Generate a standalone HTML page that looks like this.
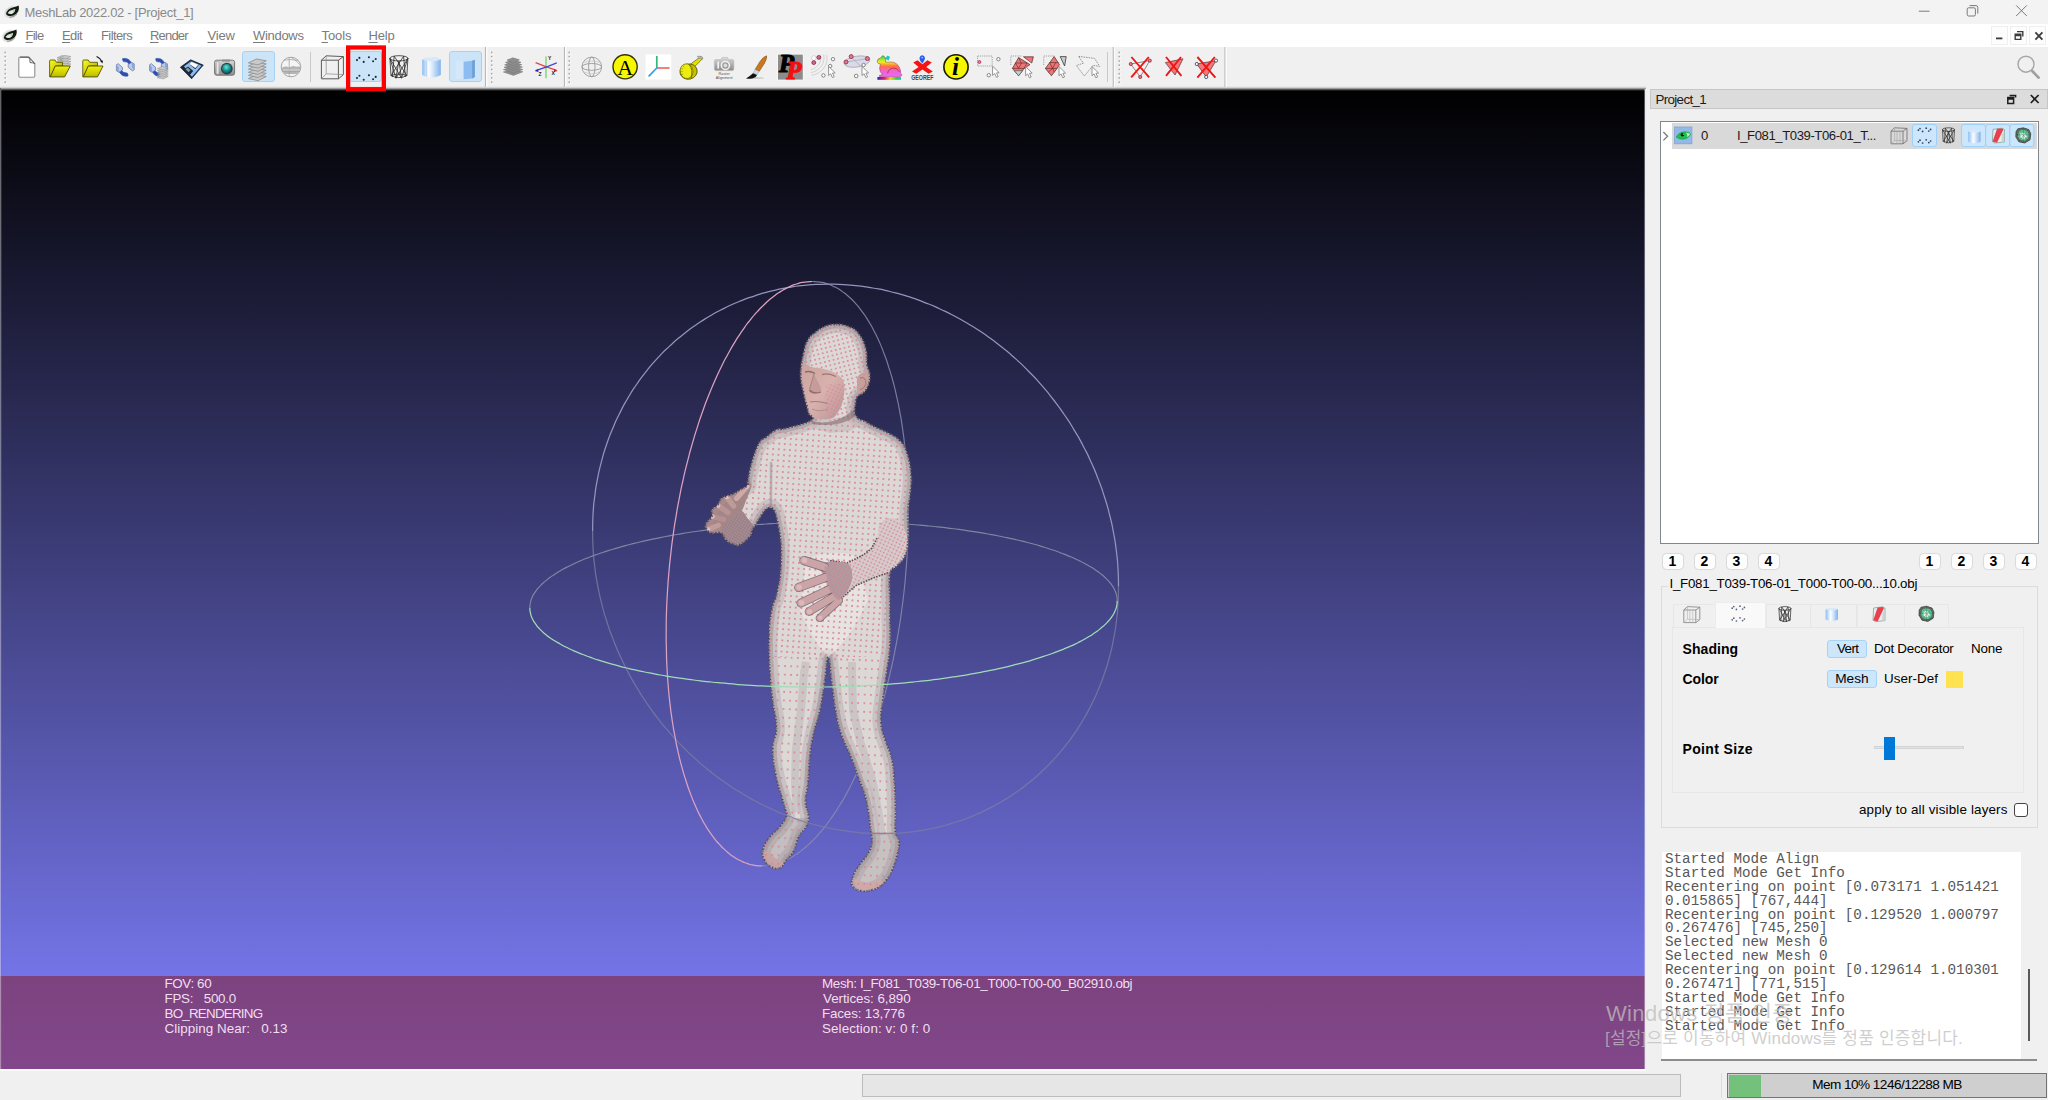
<!DOCTYPE html>
<html lang="en">
<head>
<meta charset="utf-8">
<title>MeshLab 2022.02 - [Project_1]</title>
<style>
*{box-sizing:border-box;margin:0;padding:0}
html,body{width:2048px;height:1100px;overflow:hidden;background:#f0f0f0}
body{position:relative;font-family:"Liberation Sans","NanumGothic","Noto Sans CJK KR",sans-serif;font-size:12px;color:#000}
.abs{position:absolute}
#titlebar{left:0;top:0;width:2048px;height:24px;background:#f3f3f3}
#title{left:25px;top:4px;font-size:13px;color:#8a8a8a;white-space:nowrap;line-height:18px}
#menubar{left:0;top:24px;width:2048px;height:23px;background:#fff}
.mi{top:28px;font-size:13px;color:#7b7b7b;white-space:nowrap;line-height:16px}
.mi u{text-decoration:underline;text-underline-offset:2px}
#toolbar{left:0;top:47px;width:2048px;height:41px;background:#f0f0f0}
#viewport{left:1px;top:88px;width:1644px;height:981px;background:linear-gradient(#000 0%,#8080ff 100%);overflow:hidden}
#infobar{left:0;top:888px;width:1644px;height:94px;background:linear-gradient(#7c437f,#81478a)}
.info{color:#f0dff0;font-size:13.4px;line-height:15px;white-space:pre;font-family:"Liberation Sans","NanumGothic",sans-serif}
#dock{left:1647px;top:88px;width:401px;height:982px;background:#f0f0f0}
#docktitle{left:1650px;top:89px;width:398px;height:20px;background:#dcdcdc;border:1px solid #c6c6c6}
#docktitle span{position:absolute;left:5px;top:2px;font-size:13.4px;line-height:16px;color:#1a1a1a}
#tree{left:1660px;top:121px;width:379px;height:423px;background:#fff;border:1px solid #82878f}
#row{left:1672px;top:123px;width:365px;height:26px;background:#d9d9d9}
.rt{font-size:13.1px;line-height:16px;white-space:nowrap;color:#1a1a1a}
.nb{top:553px;width:22px;height:17px;background:#fdfdfd;border:1px solid #dadada;border-radius:4.5px;font-size:14px;font-weight:bold;text-align:center;line-height:15px;color:#000;box-shadow:0 0 1px #e4e4e4}
#group{left:1661px;top:586px;width:377px;height:242px;border:1px solid #dcdcdc}
#grouptitle{left:1667.5px;top:576px;background:#f0f0f0;padding:0 2px;font-size:13.3px;line-height:16px;white-space:nowrap;letter-spacing:-0.247px}
#tabpane{left:1672px;top:627px;width:352px;height:166px;border:1px solid #e6e6e6;background:#f0f0f0}
.tab{top:604px;height:23px;background:#f0f0f0;border:1px solid #e7e7e7;border-bottom:none}
.tsel{background:#f9f9f9;border:1px solid #ececec;border-bottom:none}
.lbl{font-size:14px;font-weight:bold;left:1682px;line-height:16px;white-space:nowrap}
.opt{font-size:13.4px;line-height:16px;white-space:nowrap}
.sel{background:#cce6fb;border:1px solid #a6d2f6;border-radius:3px}
#log{left:1662px;top:852px;width:359px;height:207px;background:#fff;overflow:hidden}
#logtext{left:3px;top:1px;font-family:"Liberation Mono",monospace;font-size:14.27px;line-height:13.875px;color:#585858;white-space:pre}
.wm{color:rgba(190,190,190,.75);white-space:nowrap;font-family:"Liberation Sans","Noto Sans CJK KR","NanumGothic",sans-serif}
#wm1{letter-spacing:.34px;margin-left:1px}
#wm2{letter-spacing:.19px}
.lgl{position:relative;height:13.875px;white-space:pre}
/*FIT*/
#title{letter-spacing:-0.307px;margin-left:-0.50px}
#mi1{letter-spacing:-0.750px;margin-left:-0.50px}
#mi2{letter-spacing:-0.600px;margin-left:0.00px}
#mi3{letter-spacing:-0.600px;margin-left:1.00px}
#mi4{letter-spacing:-0.810px;margin-left:0.00px}
#mi5{letter-spacing:-0.150px;margin-left:1.50px}
#mi6{letter-spacing:-0.300px;margin-left:2.00px}
#mi7{letter-spacing:-0.110px;margin-left:1.50px}
#mi8{letter-spacing:-0.150px;margin-left:0.50px}
#dtt{letter-spacing:-0.674px;margin-left:-0.50px}
#rzero{letter-spacing:0.000px;margin-left:1.00px}
#rname{letter-spacing:-0.409px;margin-left:0.00px}
#lb1{letter-spacing:0.075px;margin-left:0.50px}
#lb2{letter-spacing:-0.115px;margin-left:0.50px}
#lb3{letter-spacing:0.350px;margin-left:0.50px}
#op1{letter-spacing:-0.600px;margin-left:1.00px}
#op2{letter-spacing:-0.300px;margin-left:0.00px}
#op3{letter-spacing:-0.150px;margin-left:0.00px}
#op5{letter-spacing:0.064px;margin-left:-1.00px}
#op6{letter-spacing:0.155px;margin-left:1.00px}
#mem{letter-spacing:-0.540px;margin-left:0.00px}
#ia1{letter-spacing:-0.375px;margin-left:0.50px}
#ia2{letter-spacing:-0.245px;margin-left:0.50px}
#ia3{letter-spacing:-0.777px;margin-left:0.50px}
#ia4{letter-spacing:0.045px;margin-left:0.50px}
#ib1{letter-spacing:-0.352px;margin-left:0.00px}
#ib2{letter-spacing:-0.064px;margin-left:1.00px}
#ib3{letter-spacing:-0.150px;margin-left:0.00px}
#ib4{letter-spacing:0.094px;margin-left:0.00px}
/*ENDFIT*/
#status{left:0;top:1069px;width:2048px;height:31px;background:#f0f0f0}
</style>
</head>
<body>
<div id="titlebar" class="abs"></div>
<div id="title" class="abs">MeshLab 2022.02 - [Project_1]</div>
<div id="menubar" class="abs"></div>
<div id="mi1" class="abs mi" style="left:26px"><u>F</u>ile</div>
<div id="mi2" class="abs mi" style="left:62px"><u>E</u>dit</div>
<div id="mi3" class="abs mi" style="left:100px">Fi<u>l</u>ters</div>
<div id="mi4" class="abs mi" style="left:150px"><u>R</u>ender</div>
<div id="mi5" class="abs mi" style="left:206px"><u>V</u>iew</div>
<div id="mi6" class="abs mi" style="left:251px"><u>W</u>indows</div>
<div id="mi7" class="abs mi" style="left:320px"><u>T</u>ools</div>
<div id="mi8" class="abs mi" style="left:368px"><u>H</u>elp</div>
<div id="toolbar" class="abs"></div>
<svg class="abs" style="left:0;top:0;z-index:4" width="2048" height="88" viewBox="0 0 2048 88">
<defs><radialGradient id="glogo" cx=".5" cy=".5" r=".5"><stop offset="0" stop-color="#9c9c9c"/><stop offset=".6" stop-color="#c2c2c2"/><stop offset="1" stop-color="#e6e6e6" stop-opacity=".2"/></radialGradient>
<g id="mlogo"><ellipse cx="8" cy="8" rx="8.4" ry="6.4" transform="rotate(-28 8 8)" fill="url(#glogo)"/>
<path d="M2.6 9.6 Q4 5 9.4 3.6 Q13.4 2.4 15.2 1.6 Q16.4 6 13.2 9.6 Q9.4 12.6 5.4 12 Q2.8 11.4 2.6 9.6 Z" fill="#141a14"/>
<path d="M4.2 9 Q6 6.4 9.4 5.8 L12 5 Q11.6 8 9.4 9.4 Q6.4 10.6 4.2 9 Z" fill="#dfeadf"/>
<path d="M9.2 6 L11.8 5.2 Q11.4 7.6 9.8 8.8 Z" fill="#a6d6a8"/>
<path d="M13.6 9.8 Q11 13.4 6 13.4" fill="none" stroke="#8a8a8a" stroke-width="1"/></g></defs>
<use href="#mlogo" x="3.4" y="4"/>
<use href="#mlogo" x="1.2" y="28"/>
<g fill="none" stroke="#7a7a7a" stroke-width="1">
<path d="M1918.8 11.2 H1929.6"/>
<path d="M1969.6 5.6 H1976 Q1977.8 5.6 1977.8 7.4 V13.6"/>
<rect x="1967.2" y="7.8" width="8.2" height="8.2" rx="1.4"/>
<path d="M2016.2 5.4 L2026.8 16 M2026.8 5.4 L2016.2 16"/>
</g>
<g fill="#fdfdfd" stroke="#efefef" stroke-width="1">
<rect x="1991.5" y="26.5" width="16" height="18"/><rect x="2010.5" y="26.5" width="16" height="18"/><rect x="2029.5" y="26.5" width="16" height="18"/>
</g>
<g fill="none" stroke="#3c3c3c" stroke-width="1.4">
<path d="M1996 38.4 H2002.4" stroke-width="1.8"/>
<path d="M2017 31.6 H2022.8 V36.6 M2015.2 34.2 H2020.8 V39.4 H2015.2 Z M2015.2 35.6 H2020.8"/>
<path d="M2035.4 32.4 L2042.4 39.6 M2042.4 32.4 L2035.4 39.6" stroke-width="1.8"/>
</g>
<circle cx="2026" cy="64.2" r="8" fill="none" stroke="#a6a6a6" stroke-width="1.4"/>
<path d="M2032.4 71.2 L2038.6 77.6" stroke="#a0a0a0" stroke-width="2.8" stroke-linecap="round"/>
</svg>
<!--TB-START--><svg class="abs" style="left:0;top:44px;z-index:5" width="1240" height="48" viewBox="0 44 1240 48">
<defs>
<linearGradient id="gfold" x1="0" y1="0" x2="0" y2="1"><stop offset="0" stop-color="#f4f400"/><stop offset="1" stop-color="#b8b800"/></linearGradient>
<linearGradient id="gfoldb" x1="0" y1="0" x2="1" y2="1"><stop offset="0" stop-color="#ffff20"/><stop offset="1" stop-color="#9a9a00"/></linearGradient>
<linearGradient id="gcyl" x1="0" y1="0" x2="1" y2="0"><stop offset="0" stop-color="#8cbcf0"/><stop offset=".35" stop-color="#fbfdff"/><stop offset=".55" stop-color="#d8e8fa"/><stop offset="1" stop-color="#7fb2ea"/></linearGradient>
<linearGradient id="gcam" x1="0" y1="0" x2="0" y2="1"><stop offset="0" stop-color="#d8d8d8"/><stop offset="1" stop-color="#8c8c8c"/></linearGradient>
<radialGradient id="glens" cx=".45" cy=".35" r=".7"><stop offset="0" stop-color="#7fe0d8"/><stop offset=".5" stop-color="#149a98"/><stop offset="1" stop-color="#0a4a52"/></radialGradient>
<linearGradient id="gbun" x1="0" y1="0" x2="0" y2="1"><stop offset="0" stop-color="#20e040"/><stop offset=".3" stop-color="#f0f020"/><stop offset=".5" stop-color="#ff7040"/><stop offset=".75" stop-color="#f060e0"/><stop offset="1" stop-color="#e070f0"/></linearGradient>
<linearGradient id="grain" x1="0" y1="0" x2="1" y2="0"><stop offset="0" stop-color="#3020c0"/><stop offset=".3" stop-color="#e02060"/><stop offset=".55" stop-color="#f0d020"/><stop offset=".8" stop-color="#30d040"/><stop offset="1" stop-color="#20c0c0"/></linearGradient>
<g id="cur"><path d="M0 0 L0 9.2 L2.1 7.3 L3.8 11.2 L5.6 10.4 L3.9 6.7 L6.6 6.5 Z" fill="#fff" stroke="#8a8a8a" stroke-width=".9" stroke-linejoin="round"/></g>
<g id="lay"><path d="M0 2.2 L5 0 L11 1 L6 3.4 Z" fill="#c9c9c9" stroke="#8f8f8f" stroke-width=".5"/></g>
</defs>
<!-- handles -->
<g><circle cx="6.1" cy="53.3" r=".75" fill="#fff"/><circle cx="5.2" cy="52.4" r=".85" fill="#a6a6a6"/><circle cx="6.1" cy="57.5" r=".75" fill="#fff"/><circle cx="5.2" cy="56.6" r=".85" fill="#a6a6a6"/><circle cx="6.1" cy="61.8" r=".75" fill="#fff"/><circle cx="5.2" cy="60.9" r=".85" fill="#a6a6a6"/><circle cx="6.1" cy="66.1" r=".75" fill="#fff"/><circle cx="5.2" cy="65.2" r=".85" fill="#a6a6a6"/><circle cx="6.1" cy="70.3" r=".75" fill="#fff"/><circle cx="5.2" cy="69.4" r=".85" fill="#a6a6a6"/><circle cx="6.1" cy="74.6" r=".75" fill="#fff"/><circle cx="5.2" cy="73.7" r=".85" fill="#a6a6a6"/><circle cx="6.1" cy="78.8" r=".75" fill="#fff"/><circle cx="5.2" cy="77.9" r=".85" fill="#a6a6a6"/><circle cx="6.1" cy="83.1" r=".75" fill="#fff"/><circle cx="5.2" cy="82.2" r=".85" fill="#a6a6a6"/><circle cx="492.6" cy="53.3" r=".75" fill="#fff"/><circle cx="491.7" cy="52.4" r=".85" fill="#a6a6a6"/><circle cx="492.6" cy="57.5" r=".75" fill="#fff"/><circle cx="491.7" cy="56.6" r=".85" fill="#a6a6a6"/><circle cx="492.6" cy="61.8" r=".75" fill="#fff"/><circle cx="491.7" cy="60.9" r=".85" fill="#a6a6a6"/><circle cx="492.6" cy="66.1" r=".75" fill="#fff"/><circle cx="491.7" cy="65.2" r=".85" fill="#a6a6a6"/><circle cx="492.6" cy="70.3" r=".75" fill="#fff"/><circle cx="491.7" cy="69.4" r=".85" fill="#a6a6a6"/><circle cx="492.6" cy="74.6" r=".75" fill="#fff"/><circle cx="491.7" cy="73.7" r=".85" fill="#a6a6a6"/><circle cx="492.6" cy="78.8" r=".75" fill="#fff"/><circle cx="491.7" cy="77.9" r=".85" fill="#a6a6a6"/><circle cx="492.6" cy="83.1" r=".75" fill="#fff"/><circle cx="491.7" cy="82.2" r=".85" fill="#a6a6a6"/><circle cx="570.1" cy="53.3" r=".75" fill="#fff"/><circle cx="569.2" cy="52.4" r=".85" fill="#a6a6a6"/><circle cx="570.1" cy="57.5" r=".75" fill="#fff"/><circle cx="569.2" cy="56.6" r=".85" fill="#a6a6a6"/><circle cx="570.1" cy="61.8" r=".75" fill="#fff"/><circle cx="569.2" cy="60.9" r=".85" fill="#a6a6a6"/><circle cx="570.1" cy="66.1" r=".75" fill="#fff"/><circle cx="569.2" cy="65.2" r=".85" fill="#a6a6a6"/><circle cx="570.1" cy="70.3" r=".75" fill="#fff"/><circle cx="569.2" cy="69.4" r=".85" fill="#a6a6a6"/><circle cx="570.1" cy="74.6" r=".75" fill="#fff"/><circle cx="569.2" cy="73.7" r=".85" fill="#a6a6a6"/><circle cx="570.1" cy="78.8" r=".75" fill="#fff"/><circle cx="569.2" cy="77.9" r=".85" fill="#a6a6a6"/><circle cx="570.1" cy="83.1" r=".75" fill="#fff"/><circle cx="569.2" cy="82.2" r=".85" fill="#a6a6a6"/><circle cx="1120.1" cy="53.3" r=".75" fill="#fff"/><circle cx="1119.2" cy="52.4" r=".85" fill="#a6a6a6"/><circle cx="1120.1" cy="57.5" r=".75" fill="#fff"/><circle cx="1119.2" cy="56.6" r=".85" fill="#a6a6a6"/><circle cx="1120.1" cy="61.8" r=".75" fill="#fff"/><circle cx="1119.2" cy="60.9" r=".85" fill="#a6a6a6"/><circle cx="1120.1" cy="66.1" r=".75" fill="#fff"/><circle cx="1119.2" cy="65.2" r=".85" fill="#a6a6a6"/><circle cx="1120.1" cy="70.3" r=".75" fill="#fff"/><circle cx="1119.2" cy="69.4" r=".85" fill="#a6a6a6"/><circle cx="1120.1" cy="74.6" r=".75" fill="#fff"/><circle cx="1119.2" cy="73.7" r=".85" fill="#a6a6a6"/><circle cx="1120.1" cy="78.8" r=".75" fill="#fff"/><circle cx="1119.2" cy="77.9" r=".85" fill="#a6a6a6"/><circle cx="1120.1" cy="83.1" r=".75" fill="#fff"/><circle cx="1119.2" cy="82.2" r=".85" fill="#a6a6a6"/></g>
<!-- separators -->
<g stroke="#c9c9c9" stroke-width="1">
<line x1="310.5" y1="52" x2="310.5" y2="82"/><line x1="1107.5" y1="52" x2="1107.5" y2="82"/>
</g>
<g stroke="#b9b9b9" stroke-width="1.2">
<line x1="485.5" y1="47" x2="485.5" y2="87"/><line x1="564.5" y1="47" x2="564.5" y2="87"/><line x1="1113.3" y1="47" x2="1113.3" y2="87"/><line x1="1225" y1="47" x2="1225" y2="87"/>
</g>
<g stroke="#fdfdfd" stroke-width="1.2">
<line x1="486.7" y1="47" x2="486.7" y2="87"/><line x1="565.7" y1="47" x2="565.7" y2="87"/><line x1="1114.5" y1="47" x2="1114.5" y2="87"/><line x1="1226.2" y1="47" x2="1226.2" y2="87"/>
</g>
<!-- checked backgrounds -->
<rect x="242.5" y="51.5" width="32" height="30" rx="2.5" fill="#cce4f7" stroke="#a6d2f5" stroke-width="1"/>
<rect x="349.5" y="51.5" width="32" height="30" rx="2.5" fill="#cce4f7" stroke="#a6d2f5" stroke-width="1"/>
<rect x="449.5" y="51.5" width="32" height="30" rx="2.5" fill="#cce4f7" stroke="#a6d2f5" stroke-width="1"/>
<!-- 1 new doc -->
<path d="M20.2 57 H28.6 L34.8 63.6 V75.8 Q34.8 77.2 33.4 77.2 H20.2 Q18.8 77.2 18.8 75.8 V58.4 Q18.8 57 20.2 57 Z" fill="#fff" stroke="#8e8e8e" stroke-width="1.1" stroke-linejoin="round"/>
<path d="M28.6 57 Q30.4 59.6 30 62.6 Q32.8 62.4 34.8 63.8 Z" fill="#f2f2f2" stroke="#5a5a5a" stroke-width=".9" stroke-linejoin="round"/>
<path d="M20 57.2 H28.4" stroke="#606060" stroke-width="1.2"/>
<!-- 2 folder + layers -->
<g transform="translate(57,55.5)"><use href="#lay" y="7.5"/><use href="#lay" y="5.6"/><use href="#lay" y="3.7"/><use href="#lay" y="1.8"/><use href="#lay" y="0"/><use href="#lay" x="3" y="7.5"/><use href="#lay" x="3" y="5"/><use href="#lay" x="3" y="2.5"/><use href="#lay" x="3" y="0"/></g>
<path d="M49.6 61 Q49.6 60 50.6 60 H55 L56.5 62.3 H62.5 V66 H55.5 L50.5 76.8 H49.6 Z" fill="url(#gfoldb)" stroke="#5a5a00" stroke-width=".9" stroke-linejoin="round"/>
<path d="M55.3 66 H70.3 L64.6 76.9 H50.2 Z" fill="url(#gfold)" stroke="#4c4c00" stroke-width=".9" stroke-linejoin="round"/>
<!-- 3 folder + arrow -->
<path d="M82.8 61 Q82.8 60 83.8 60 H88.2 L89.7 62.3 H97.5 V66 H88.5 L83.5 76.8 H82.8 Z" fill="url(#gfoldb)" stroke="#5a5a00" stroke-width=".9" stroke-linejoin="round"/>
<path d="M88.3 66 H103 L97.5 76.9 H83.2 Z" fill="url(#gfold)" stroke="#4c4c00" stroke-width=".9" stroke-linejoin="round"/>
<path d="M96.5 56.5 Q100.5 58 101.8 62" fill="none" stroke="#222" stroke-width="1.1"/>
<path d="M100.3 61 L103 60.5 L102.4 63.6 Z" fill="#111"/>
<!-- 4 reload -->
<g id="rel">
<path d="M122.6 58.6 Q128.6 57.4 131.2 62.6 L129 64 Q127.4 61.4 123.4 61.6 Q122.2 60 122.6 58.6 Z" fill="#2c4fb0" stroke="#2c4fb0" stroke-width=".6" stroke-linejoin="round"/>
<path d="M128.2 64.4 L131.8 62.4 L134.2 63.8 V69.8 L132.4 70.9 L128.2 67.2 Z" fill="#b7ccf3" stroke="#5a6892" stroke-width=".7" stroke-linejoin="round"/>
<path d="M131.8 62.6 L134 63.9 V69.6 L131.9 67.6 Z" fill="#8aa6e0"/>
</g>
<use href="#rel" transform="rotate(180 125.3 67.3)"/>
<!-- 5 reload + layers -->
<use href="#rel" transform="translate(33.2 0)"/>
<use href="#rel" transform="translate(33.2 0) rotate(180 125.3 67.3)"/>
<g transform="translate(157.3,66.5)"><use href="#lay" y="9"/><use href="#lay" y="7.2"/><use href="#lay" y="5.4"/><use href="#lay" y="3.6"/><use href="#lay" y="1.8"/><use href="#lay" y="0"/></g>
<!-- 6 save -->
<path d="M190.6 59.8 L203.3 65.1 L191.6 78.8 L180.3 67.2 Z" fill="#16283f" stroke="#0c1624" stroke-width=".6" stroke-linejoin="round"/>
<path d="M184 66.5 L190.5 61.5 L193 62.6 L190.2 65 L195.3 69.3 L199 64.6 L201.5 65.7 L192 76.8 L190 74.7 L193.2 71 L188 66.6 L185.5 68.2 Z" fill="#8ebcf0"/>
<path d="M191.6 61.6 L198.7 64.6 L195.4 68.3 L189.3 64.2 Z" fill="#fff" stroke="#3c5a80" stroke-width=".4"/>
<path d="M185.5 69.2 L187.8 67.6 L190.6 70.2 L188.5 72.2 Z" fill="#8c948c"/>
<!-- 7 camera -->
<rect x="214.6" y="60.2" width="20" height="15" rx="2" fill="url(#gcam)" stroke="#6e6e6e" stroke-width=".9"/>
<rect x="216.3" y="61.5" width="2.6" height="12.5" fill="#e8e8e8" stroke="#9a9a9a" stroke-width=".4"/>
<rect x="222" y="59.6" width="8" height="2" fill="#909090"/>
<circle cx="226.8" cy="68.6" r="5.9" fill="#3c3c3c"/>
<circle cx="226.8" cy="68.6" r="4.7" fill="url(#glens)"/>
<!-- 8 layers (checked) -->
<g transform="translate(248.4,59) scale(1.62 1.75)"><use href="#lay" y="9"/><use href="#lay" y="7.2"/><use href="#lay" y="5.4"/><use href="#lay" y="3.6"/><use href="#lay" y="1.8"/><use href="#lay" y="0"/></g>
<!-- 9 raster globe -->
<circle cx="291" cy="67" r="9.8" fill="#f4f4f4" stroke="#a8a8a8" stroke-width="1"/>
<path d="M281.6 68 Q286 65.5 289 67.5 Q293 64.8 296 66.8 L300.5 66.3 Q300.5 72 296.5 74 H285 Q281.8 71.5 281.6 68 Z" fill="#b4b4b4"/>
<path d="M282 71.2 H300 M289.2 57.4 V76.6 M291 57.2 Q296.5 61 300 64.6 M284 60.2 Q291 58.8 298.2 60.4" fill="none" stroke="#9c9c9c" stroke-width=".7"/>
<path d="M283 70 H299.4" stroke="#e4e4e4" stroke-width=".8"/>
<!-- 10 bbox -->
<g fill="none" stroke="#4a4a4a" stroke-width=".9" stroke-linejoin="round">
<rect x="321.4" y="60.2" width="17" height="18.6"/>
<path d="M321.4 60.2 L326.2 55.8 L343.4 56.6 L338.4 60.2 M343.4 56.6 V74.6 L338.4 78.8"/>
<path d="M326.2 55.8 V73.8 L321.4 78.8 M326.2 73.8 L343.4 74.6" stroke="#8a8a8a" stroke-width=".7"/>
</g>
<!-- 11 points -->
<g fill="#1b2d48">
<circle cx="359.4" cy="57.9" r="1.05"/><circle cx="357" cy="60.1" r="1.05"/><circle cx="363.7" cy="61.9" r="1.05"/><circle cx="368.9" cy="57.3" r="1.05"/><circle cx="375.7" cy="59" r="1.05"/><circle cx="373.1" cy="61.3" r="1.05"/>
<circle cx="359.4" cy="75.8" r="1.05"/><circle cx="357" cy="78" r="1.05"/><circle cx="363.7" cy="79.8" r="1.05"/><circle cx="368.9" cy="75.2" r="1.05"/><circle cx="375.7" cy="76.9" r="1.05"/><circle cx="373.1" cy="79.2" r="1.05"/>
</g>
<rect x="348.15" y="47.5" width="35.7" height="41.7" fill="none" stroke="#ff0000" stroke-width="4.3"/>
<!-- 12 wireframe -->
<g fill="none" stroke="#2c2c2c" stroke-width=".8" stroke-linejoin="round">
<ellipse cx="398.9" cy="58.3" rx="9" ry="2.6"/>
<path d="M389.9 58.3 L391 75.6 Q398.9 79.6 406.9 75.6 L407.9 58.3"/>
<path d="M391 75.6 Q398.9 72.4 406.9 75.6"/>
<path d="M389.9 58.3 L401.5 78.2 M407.9 58.3 L396 78.2 M394.2 56.2 L406.9 75.6 M403.6 56.2 L391 75.6 M394.2 56.2 L392.4 77 M403.6 56.2 L405.4 77 M398.9 60.9 L396 78.2 M398.9 60.9 L401.5 78.2 M389.9 58.3 L396 78.2 M407.9 58.3 L401.5 78.2"/>
</g>
<!-- 13 flat cylinder -->
<path d="M422.2 59.5 Q431.5 54.5 440.8 59.5 V75 Q431.5 80 422.2 75 Z" fill="url(#gcyl)"/>
<path d="M422.2 59.5 Q431.5 54.8 440.8 59.5 Q431.5 63.4 422.2 59.5 Z" fill="#d6e8fb"/>
<path d="M436.5 61 V76.7 M426.5 61 V76.7" stroke="#a9cdf5" stroke-width=".6"/>
<!-- 14 smooth half cylinder -->
<path d="M455.5 60.5 H463.6 V79 H455.5 Z" fill="#d7e9fa" opacity=".8"/>
<path d="M463.6 61.8 L472.2 60.8 L474.8 59.8 V77 L472.2 78.6 L463.6 79.2 Z" fill="#8dbdf0"/>
<path d="M472.2 60.8 L474.8 59.8 V77 L472.2 78.6 Z" fill="#6c9fd8"/>
<!-- 15 layer stack dark -->
<g transform="translate(503.4,57.6)" fill="#8e8e8e" stroke="#707070" stroke-width=".5">
<path d="M0 14.4 L9.5 11.8 L19.5 14.2 L10 17.8 Z"/><path d="M0 12 L9.5 9.4 L19.5 11.8 L10 15.4 Z"/><path d="M0.6 9.6 L9.5 7 L19 9.4 L10 13 Z"/><path d="M1.2 7.2 L9.5 4.6 L18.4 7 L10 10.6 Z"/><path d="M2 4.8 L9.5 2.4 L17.6 4.6 L10 8.2 Z"/><path d="M3.6 2.4 L9.5 0.2 L16 2.2 L10 5.6 Z"/>
</g>
<!-- 16 axis -->
<line x1="546" y1="56.6" x2="546" y2="78.2" stroke="#8edb8a" stroke-width="1.7"/>
<path d="M535.6 62.6 Q546 67 556.6 70.4" fill="none" stroke="#e04848" stroke-width="1.3"/>
<path d="M556.8 62.8 Q546 67.4 535.6 70.6" fill="none" stroke="#4848d8" stroke-width="1.3"/>
<path d="M554 69 L557.6 71 L554 72 Z" fill="#d02020"/>
<path d="M538.2 69 L534.8 71 L538.4 72 Z" fill="#2020c0"/>
<text x="548" y="60.4" font-family="Liberation Sans, sans-serif" font-size="5" font-weight="bold" fill="#222">Y</text>
<text x="538.6" y="75.8" font-family="Liberation Sans, sans-serif" font-size="5" font-weight="bold" fill="#222">Z</text>
<text x="551.4" y="75.4" font-family="Liberation Sans, sans-serif" font-size="5" font-weight="bold" fill="#222">X</text>
<!-- 17 trackball globe -->
<g fill="none" stroke="#9a9a9a" stroke-width=".9">
<circle cx="591.8" cy="66.9" r="9.8"/>
<ellipse cx="591.8" cy="66.9" rx="9.8" ry="3.4"/>
<ellipse cx="591.8" cy="66.9" rx="3.2" ry="9.8"/>
<path d="M583 62.6 Q591.8 59.4 600.6 62.6 M583.4 71.8 Q591.8 75.6 600.2 71.8" stroke-width=".6" stroke="#bdbdbd"/>
</g>
<!-- 18 A -->
<circle cx="625.1" cy="66.8" r="12.1" fill="#f7f700" stroke="#33330a" stroke-width="1.4"/>
<text x="625.1" y="74.6" text-anchor="middle" font-family="Liberation Serif, serif" font-size="22" fill="#000">A</text>
<!-- 19 axes white -->
<rect x="645.5" y="54.5" width="25.8" height="25" fill="#fff"/>
<path d="M656.8 56 V68" stroke="#35b67c" stroke-width="1.7"/>
<path d="M656.8 68 H669.6" stroke="#f06a6a" stroke-width="1.7"/>
<path d="M656.8 68 L648.6 76.4" stroke="#2aa4e0" stroke-width="1.7"/>
<!-- 20 tape -->
<path d="M688.5 66 Q693 62 697 59.4 L700.6 56.2 L702.6 58.6 L700 61.4 Q696 65.5 692.5 68 Z" fill="#e6e000" stroke="#5a5a00" stroke-width=".7" stroke-linejoin="round"/>
<path d="M697.4 56 L702.2 56.8 L702.9 58.8 L698.4 58.4 Z" fill="#b4b4c4" stroke="#777" stroke-width=".4"/>
<ellipse cx="688.6" cy="71.6" rx="8.6" ry="7.6" transform="rotate(-12 688.6 71.6)" fill="#c8c400" stroke="#4a4a00" stroke-width=".8"/>
<ellipse cx="686.6" cy="71.2" rx="6.4" ry="7.4" transform="rotate(-12 686.6 71.2)" fill="#ecec10" stroke="#5a5a00" stroke-width=".6"/>
<path d="M689.4 64.8 Q693.4 70 691 78" fill="none" stroke="#5a5a00" stroke-width=".8"/>
<path d="M683 66 L684.2 67 M681.6 68.6 L683 69.2 M681.2 71.6 L682.6 71.6 M681.8 74.6 L683.2 74.2" stroke="#5a5a00" stroke-width=".5"/>
<!-- 21 raster alignment camera -->
<path d="M716 59.6 H720.6 L722.2 57.4 H727.4 L728.8 59.6 H732.4 Q733.8 59.6 733.8 61 V69 Q733.8 70.6 732.4 70.6 H716 Q714.4 70.6 714.4 69 V61 Q714.4 59.6 716 59.6 Z" fill="url(#gcam)" stroke="#b2b2b2" stroke-width=".5"/>
<rect x="717.4" y="61.6" width="1.6" height="7" fill="#f4f4f4"/>
<circle cx="725.4" cy="65.4" r="4" fill="#9a9a9a" stroke="#f2f2f2" stroke-width="1.5"/>
<circle cx="725.4" cy="65.4" r="1.9" fill="#dcdcdc"/>
<text x="724.2" y="74.9" text-anchor="middle" font-family="Liberation Sans, sans-serif" font-size="3.8" fill="#555">Raster</text>
<text x="724.2" y="79.2" text-anchor="middle" font-family="Liberation Sans, sans-serif" font-size="3.8" fill="#555">Alignment</text>
<!-- 22 brush -->
<ellipse cx="757" cy="78" rx="7" ry="1" fill="#c8c8c8" opacity=".8"/>
<path d="M766.6 55.8 Q767.4 58 764.4 63.4 L759.2 71.4 L755 69.6 L760 61.4 Q763.6 56.4 766.6 55.8 Z" fill="#c8781e" stroke="#7a4410" stroke-width=".5"/>
<path d="M759.2 71.4 L757 75 L753 73.2 L755 69.6 Z" fill="#ccd8e4" stroke="#8a96a4" stroke-width=".4"/>
<path d="M757 75 Q756.4 77.4 753 78.2 Q749 79 746 78.6 Q750 76 753 73.2 Z" fill="#111"/>
<!-- 23 PP -->
<rect x="777.3" y="53.8" width="26.2" height="26.4" fill="#fafafa"/>
<rect x="778" y="54.6" width="24.8" height="25" fill="#8c8c8c"/>
<text x="779" y="72" font-family="Liberation Serif, serif" font-size="24.5" font-weight="bold" font-style="italic" fill="#000" stroke="#000" stroke-width="1.2" stroke-linejoin="round">P</text>
<text x="786.4" y="79.4" font-family="Liberation Serif, serif" font-size="24.5" font-weight="bold" font-style="italic" fill="#f01010" stroke="#f01010" stroke-width="1.2" stroke-linejoin="round">P</text>
<!-- 24 select points -->
<g fill="none" stroke="#cfcfcf" stroke-width=".9">
<path d="M823.8 54.6 Q825.4 65 817 70.2 Q813.4 72.4 810.8 72.6"/>
<path d="M826.8 55 Q828.6 66.6 818.6 72.8 Q815 75 811.6 75.2"/>
<path d="M820.8 54.6 Q822 63 815.8 67.4 Q813.4 69.2 810.8 69.6"/>
</g>
<circle cx="813.8" cy="58" r="2.3" fill="#fff" stroke="#ccc" stroke-width=".8"/>
<circle cx="818.8" cy="57.4" r="1.9" fill="#d86a86" stroke="#7a1a38" stroke-width=".8"/>
<circle cx="813.8" cy="62.6" r="1.9" fill="#d86a86" stroke="#7a1a38" stroke-width=".8"/>
<g fill="#fff" stroke="#777" stroke-width=".9"><circle cx="833" cy="59.2" r="1.7"/><circle cx="823.4" cy="75.4" r="1.7"/><circle cx="830.2" cy="66" r="1.7"/></g>
<use href="#cur" x="828.6" y="66.4"/>
<!-- 25 select plane -->
<ellipse cx="857" cy="61.6" rx="13" ry="5.4" transform="rotate(-9 857 61.6)" fill="#d9d9ea" stroke="#aeaeb4" stroke-width=".9"/>
<path d="M846 62 L867.4 58.6 M851.2 56.8 L861 66.6" stroke="#9a9aa8" stroke-width=".6"/>
<g fill="#e07a90" stroke="#8a2a44" stroke-width=".8"><circle cx="851.2" cy="56.6" r="2"/><circle cx="846" cy="62" r="2"/><circle cx="867.4" cy="58.6" r="2"/></g>
<circle cx="856.2" cy="76" r="1.8" fill="#fff" stroke="#777" stroke-width=".9"/>
<circle cx="863.6" cy="65" r="1.7" fill="#fff" stroke="#777" stroke-width=".9"/>
<use href="#cur" x="862" y="66.4"/>
<!-- 26 bunny -->
<path d="M884.4 58.6 L887.8 55.4 L890 57 L888.6 60.4 Z" fill="#20c8c0"/>
<path d="M877.2 62 Q877 58.6 880.6 58 L882.4 55.8 Q884.4 55.4 884.8 57.8 Q886 59.6 885.4 62 Q888 62.4 891.4 62 Q897 62.6 899.4 67.4 Q901 70.4 900.6 73.2 Q902.4 74.4 901.4 76 L897.6 76.8 H879.6 L879.4 75.4 L882.6 74.6 Q879.6 72 879.6 68.4 Q879.8 65.6 880.8 64.4 Q878 64 877.2 62 Z" fill="url(#gbun)" stroke="#a02860" stroke-width=".5"/>
<path d="M887.6 73.4 Q888.4 68.6 893.6 68 Q898 68.4 899.6 72" fill="none" stroke="#a01850" stroke-width=".7"/>
<rect x="877.4" y="77" width="23.6" height="2.8" fill="url(#grain)"/>
<!-- 27 georef -->
<path d="M913.2 62.4 L917.6 60.2 L922.4 64.2 L927.4 60.2 L931.8 62.6 L926.2 67 L932.8 71.6 L928.6 73.8 L922.4 69.6 L916.2 73.8 L912 71.6 L918.6 67 Z" fill="#f41414"/>
<path d="M922.2 63.6 Q918.6 59 919.8 57 Q920.6 55.2 922.2 55.2 Q923.9 55.2 924.7 57 Q925.8 59 922.2 63.6 Z" fill="#2a5af0"/>
<circle cx="922.2" cy="57.6" r=".9" fill="#a8c0ff"/>
<text x="922.4" y="79.6" text-anchor="middle" font-family="Liberation Sans, sans-serif" font-size="6.3" font-weight="bold" fill="#444" textLength="22.4" lengthAdjust="spacingAndGlyphs">GEOREF</text>
<!-- 28 info -->
<circle cx="956" cy="66.9" r="12.1" fill="#f7f700" stroke="#1a1a00" stroke-width="1.6"/>
<text x="955.6" y="75.4" text-anchor="middle" font-family="Liberation Serif, serif" font-size="25" font-weight="bold" font-style="italic" fill="#000">i</text>
<!-- 29 select vertices -->
<rect x="977.6" y="56" width="14.6" height="10" fill="none" stroke="#8a8a8a" stroke-width=".8" stroke-dasharray="1.2 1"/>
<circle cx="979.4" cy="62" r="1.5" fill="#e87a90" stroke="#a02848" stroke-width=".7"/>
<g fill="#fff" stroke="#777" stroke-width=".9"><circle cx="998.4" cy="59.2" r="1.7"/><circle cx="988.8" cy="75.2" r="1.7"/></g>
<use href="#cur" x="992.6" y="66.2"/>
<!-- 30 select faces -->
<path d="M1010.8 65 V56 H1022" fill="none" stroke="#8a8a8a" stroke-width=".8" stroke-dasharray="1.2 1"/>
<path d="M1018.6 57.6 L1012.4 68.4 L1018.6 75.8 L1024 68.6 L1030 64.6 Z" fill="#f07474" stroke="#4a2a2a" stroke-width=".7" stroke-linejoin="round"/>
<path d="M1012.4 68.4 H1024 M1015.4 63 H1027 L1024 68.6 M1015.4 63 L1018.6 68.4 L1021.4 63 L1018.6 57.6" fill="none" stroke="#4a2a2a" stroke-width=".6"/>
<path d="M1014.4 70.8 L1018.6 75.8 L1022.6 70.6 Z" fill="#c6d0cc" stroke="#4a4a4a" stroke-width=".6"/>
<path d="M1023.4 56.8 H1033.4 L1031.6 63.4 Z" fill="#f07474" stroke="#4a2a2a" stroke-width=".7" stroke-linejoin="round"/>
<path d="M1021.6 57 L1032 64.6" stroke="#f4f4f4" stroke-width="1.3"/>
<use href="#cur" x="1025.6" y="66.6"/>
<!-- 31 select connected -->
<path d="M1043.8 65 V56 H1055" fill="none" stroke="#8a8a8a" stroke-width=".8" stroke-dasharray="1.2 1"/>
<path d="M1054.2 56.6 L1045.4 68.4 L1051.4 75.8 L1057 68.6 L1059.4 64.6 Z" fill="#f07474" stroke="#4a2a2a" stroke-width=".7" stroke-linejoin="round"/>
<path d="M1045.4 68.4 H1057 M1049.6 62.6 H1058.4 M1049.6 62.6 L1052.6 68.4 L1055.6 62.6 M1048.4 72.2 L1052.6 68.4 L1054.4 72.2" fill="none" stroke="#4a2a2a" stroke-width=".6"/>
<path d="M1060.2 56.6 H1066.2 L1064.6 66 Z" fill="#c6ccca" stroke="#3a3a3a" stroke-width=".8" stroke-linejoin="round"/>
<use href="#cur" x="1059" y="66.6"/>
<!-- 32 polyline -->
<path d="M1078.6 56.4 L1094.6 58.4 L1099.6 66.4 L1093 65.4 L1084.4 76 L1076.4 65.6 L1083.4 63.2 Z" fill="#f2f2f2" stroke="#7c7c7c" stroke-width=".8" stroke-dasharray="1.6 .9" stroke-linejoin="round"/>
<use href="#cur" x="1092" y="66.6"/>
<!-- 33 delete verts -->
<path d="M1130.8 64 L1149.8 60.6 L1140.2 77 Z" fill="none" stroke="#6a5a5a" stroke-width=".7"/>
<g fill="#e07a8c" stroke="#7a2030" stroke-width=".7"><circle cx="1130.8" cy="64" r="1.6"/><circle cx="1149.8" cy="60.6" r="1.6"/><circle cx="1140.2" cy="77" r="1.6"/></g>
<path d="M1131.4 57 L1149.2 77.4 M1148.8 57 L1131.2 77.4" stroke="#f01414" stroke-width="1.9" fill="none"/>
<!-- 34 delete faces -->
<path d="M1165.4 62.6 L1183 58.8 L1175 75 Z" fill="#f47878" stroke="#5a3030" stroke-width=".7" stroke-linejoin="round"/>
<path d="M1166 57 L1181.4 75.8 M1181 57 L1166 75.8" stroke="#f01414" stroke-width="1.9" fill="none"/>
<!-- 35 delete both -->
<path d="M1196.8 64 L1216 60.6 L1206.2 77 Z" fill="#f47878" stroke="#4a3040" stroke-width=".7" stroke-linejoin="round"/>
<g fill="#fff" stroke="#3a3040" stroke-width=".8"><circle cx="1196.8" cy="64" r="1.6"/><circle cx="1216" cy="60.6" r="1.6"/><circle cx="1206.2" cy="77" r="1.6"/></g>
<path d="M1197.4 57 L1215.4 77.6 M1214.8 57 L1197.4 77.6" stroke="#f01414" stroke-width="1.9" fill="none"/>
</svg>
<!--TB-END-->
<div id="viewport" class="abs">
<!--FIG-START--><svg class="abs" style="left:0;top:0" width="1644" height="981" viewBox="1 88 1644 981">
<defs>
<pattern id="pd1" width="5.6" height="5.6" patternUnits="userSpaceOnUse" patternTransform="rotate(4)"><rect x="1" y="1" width="1.7" height="1.7" fill="#dc8094"/></pattern>
<pattern id="pd2" width="4.5" height="4.5" patternUnits="userSpaceOnUse" patternTransform="rotate(-14)"><rect x="1" y="1" width="1.6" height="1.6" fill="#dc8094"/></pattern>
<pattern id="pd3" width="6.2" height="8.6" patternUnits="userSpaceOnUse" patternTransform="rotate(2)"><rect x="1" y="1" width="1.7" height="1.7" fill="#d98498"/></pattern>
<pattern id="pd4" width="3.6" height="3.6" patternUnits="userSpaceOnUse" patternTransform="rotate(25)"><rect x=".6" y=".6" width="1.5" height="1.5" fill="#d67e92"/></pattern>
<pattern id="pm" width="2.6" height="2.6" patternUnits="userSpaceOnUse" patternTransform="rotate(30)"><path d="M0 0H2.6M0 0V2.6" stroke="#b49ca2" stroke-width=".6"/></pattern>
<linearGradient id="gface" x1="0" y1="0" x2="1" y2="1"><stop offset="0" stop-color="#c9a29f"/><stop offset=".5" stop-color="#d9b2ae"/><stop offset="1" stop-color="#b89294"/></linearGradient>
<clipPath id="cbody"><path d="M836.0 324.5 C841.4 324.5 842.9 324.5 848.0 326.5 C853.1 328.5 853.9 328.0 858.0 333.0 C862.1 338.0 863.4 340.5 865.5 348.0 C867.6 355.5 866.1 359.2 867.0 365.0 C867.9 370.8 869.0 368.8 869.5 373.0 C870.0 377.2 870.3 378.6 869.0 383.0 C867.7 387.4 866.6 389.0 864.0 392.0 C861.4 395.0 860.0 393.4 858.0 396.0 C856.0 398.6 856.0 398.3 855.5 403.0 C855.0 407.7 853.5 411.6 856.0 416.0 C858.5 420.4 861.6 419.4 866.0 422.0 C870.4 424.6 869.4 424.2 875.0 427.0 C880.6 429.8 884.2 430.7 890.0 434.0 C895.8 437.3 896.1 436.8 900.0 441.0 C903.9 445.2 903.9 444.3 906.5 452.0 C909.1 459.7 910.2 464.0 911.0 474.0 C911.8 484.0 910.7 486.4 910.0 495.0 C909.3 503.6 908.5 500.5 908.0 511.0 C907.5 521.5 908.8 529.4 908.0 540.0 C907.2 550.6 907.3 550.3 904.6 556.4 C901.9 562.5 899.8 562.1 896.4 566.2 C893.0 570.3 891.5 565.6 890.0 574.0 C888.5 582.4 890.0 591.7 890.0 602.0 C890.0 612.3 890.0 607.7 890.0 618.0 C890.0 628.3 890.8 633.0 890.0 646.0 C889.2 659.0 888.1 660.8 886.4 673.6 C884.7 686.4 884.0 689.5 882.7 701.0 C881.4 712.5 880.3 713.4 881.0 722.7 C881.7 732.0 883.0 732.5 885.5 741.0 C888.0 749.5 889.7 749.3 891.8 759.0 C893.9 768.7 893.6 770.8 894.5 782.7 C895.4 794.6 895.3 798.5 895.5 810.0 C895.7 821.5 894.7 824.6 895.5 831.8 C896.3 839.0 898.6 835.7 899.0 841.0 C899.4 846.3 899.0 847.5 897.3 854.5 C895.6 861.5 894.3 865.0 891.8 871.0 C889.3 877.0 889.2 876.4 886.4 880.0 C883.6 883.6 883.4 884.1 880.0 886.4 C876.6 888.7 876.0 888.9 871.8 890.0 C867.6 891.1 866.3 891.8 861.8 891.0 C857.3 890.2 854.8 889.6 852.7 886.4 C850.6 883.2 851.2 882.2 852.7 877.3 C854.2 872.4 855.6 870.8 859.0 865.5 C862.4 860.2 864.3 859.6 867.3 854.5 C870.3 849.4 871.0 848.9 871.8 843.6 C872.6 838.3 872.2 841.7 870.9 831.8 C869.6 821.9 869.2 813.3 866.4 801.0 C863.6 788.7 862.4 788.8 859.0 779.0 C855.6 769.2 856.0 769.6 851.8 759.0 C847.6 748.4 844.8 745.0 841.0 733.6 C837.2 722.2 837.6 721.9 835.5 710.0 C833.4 698.1 833.5 695.0 831.8 682.7 C830.1 670.4 829.9 657.3 828.2 657.3 C826.5 657.3 826.4 670.4 824.5 682.7 C822.6 695.0 822.5 698.1 820.0 710.0 C817.5 721.9 815.9 723.0 813.6 733.6 C811.3 744.2 811.3 744.0 810.0 755.5 C808.7 767.0 809.0 772.1 808.0 782.7 C807.0 793.3 805.4 793.2 805.5 801.0 C805.6 808.8 808.3 810.1 808.5 816.0 C808.7 821.9 808.6 821.6 806.4 826.4 C804.2 831.2 802.0 830.7 799.0 836.4 C796.0 842.1 796.5 845.5 793.6 851.0 C790.7 856.5 789.6 856.0 786.4 860.0 C783.2 864.0 783.8 866.5 780.0 868.0 C776.2 869.5 773.6 868.3 770.0 866.4 C766.4 864.5 766.2 863.6 764.5 860.0 C762.8 856.4 761.8 855.9 762.7 851.0 C763.6 846.1 764.2 844.7 768.2 839.0 C772.2 833.3 775.8 831.7 780.0 826.4 C784.2 821.1 785.1 820.2 786.4 816.4 C787.7 812.6 786.6 814.5 785.5 810.0 C784.4 805.5 784.1 805.5 781.8 797.0 C779.5 788.5 777.6 785.0 775.5 773.6 C773.4 762.2 772.5 758.6 772.7 748.0 C772.9 737.4 776.4 739.0 776.4 728.0 C776.4 717.0 774.2 713.7 772.7 701.0 C771.2 688.3 770.9 688.5 770.0 673.6 C769.1 658.7 768.6 651.8 769.0 637.0 C769.4 622.2 769.9 620.3 771.8 610.0 C773.7 599.7 774.9 603.5 777.0 593.0 C779.1 582.5 780.5 579.9 781.0 565.0 C781.5 550.1 781.6 542.4 779.0 529.0 C776.4 515.6 775.8 508.0 770.0 507.5 C764.2 507.0 758.7 520.4 754.0 527.0 C749.3 533.6 753.3 531.9 750.0 536.0 C746.7 540.1 744.0 542.6 740.0 544.5 C736.0 546.4 736.3 545.0 733.0 544.0 C729.7 543.0 728.8 542.6 726.0 540.0 C723.2 537.4 724.3 534.6 721.0 533.0 C717.7 531.4 715.2 533.8 712.0 533.0 C708.8 532.2 708.7 531.8 707.3 529.7 C705.9 527.6 705.0 527.1 706.0 524.0 C707.0 520.9 710.4 519.9 711.8 516.6 C713.2 513.3 710.7 512.7 712.0 510.0 C713.3 507.3 715.4 507.8 717.5 505.2 C719.6 502.6 718.9 501.1 721.0 499.0 C723.1 496.9 723.7 497.4 726.5 496.2 C729.3 495.0 729.9 495.4 733.0 494.0 C736.1 492.6 736.6 492.0 740.0 490.0 C743.4 488.0 745.5 487.8 747.4 485.5 C749.3 483.2 746.9 485.5 748.0 480.0 C749.1 474.5 749.4 470.5 752.0 462.0 C754.6 453.5 755.6 449.3 759.0 443.5 C762.4 437.7 762.3 440.3 766.5 437.0 C770.7 433.7 772.6 431.5 777.0 429.5 C781.4 427.5 777.6 430.6 785.5 428.5 C793.4 426.4 805.6 424.1 811.0 420.5 C816.4 416.9 809.4 416.3 808.5 413.0 C807.6 409.7 808.2 411.3 807.0 406.5 C805.8 401.7 805.0 400.2 803.5 392.5 C802.0 384.8 800.6 382.9 800.7 373.5 C800.8 364.1 802.2 359.8 803.9 352.0 C805.6 344.2 805.5 344.4 808.0 340.0 C810.5 335.6 810.7 336.1 814.7 333.0 C818.7 329.9 820.0 328.5 825.0 326.5 C830.0 324.5 830.6 324.5 836.0 324.5 Z"/></clipPath>
<clipPath id="chead"><rect x="790" y="320" width="90" height="101"/></clipPath>
<clipPath id="ctorso"><rect x="740" y="421" width="180" height="236"/></clipPath>
<clipPath id="clegs"><rect x="750" y="657" width="160" height="250"/></clipPath>
</defs>
<g fill="none" stroke-width="1.15">
<path d="M529.8 607.8 C530.0 606.0 529.6 606.0 530.5 602.4 C531.3 598.8 530.7 600.6 532.3 597.0 C534.0 593.4 533.0 595.2 535.5 591.6 C538.0 588.1 536.5 589.8 539.8 586.3 C543.1 582.8 541.3 584.5 545.4 581.1 C549.5 577.6 547.3 579.3 552.2 575.9 C557.1 572.6 554.5 574.2 560.1 570.9 C565.8 567.6 562.8 569.2 569.2 566.0 C575.6 562.9 572.2 564.4 579.3 561.3 C586.4 558.3 582.7 559.8 590.5 556.8 C598.3 553.9 594.3 555.3 602.7 552.5 C611.2 549.7 606.8 551.0 615.8 548.4 C624.9 545.7 620.2 547.0 629.9 544.5 C639.5 542.0 634.6 543.2 644.7 540.9 C654.9 538.6 649.7 539.7 660.3 537.6 C671.0 535.5 665.6 536.5 676.7 534.5 C687.8 532.6 682.1 533.5 693.6 531.8 C705.1 530.1 699.3 530.9 711.1 529.4 C723.0 527.8 717.0 528.5 729.1 527.2 C741.2 525.9 735.1 526.5 747.5 525.4 C759.9 524.4 753.7 524.9 766.2 524.0 C778.8 523.1 772.5 523.5 785.2 522.9 C797.9 522.3 791.5 522.5 804.3 522.1 C817.1 521.8 810.7 521.9 823.5 521.7 C836.3 521.6 829.9 521.6 842.7 521.7 C855.5 521.8 849.1 521.7 861.8 522.0 C874.5 522.3 868.2 522.1 880.8 522.6 C893.4 523.2 887.2 522.9 899.5 523.7 C911.9 524.4 905.8 524.0 917.9 525.0 C930.0 526.0 924.1 525.5 935.9 526.7 C947.7 527.9 941.9 527.3 953.4 528.7 C964.9 530.2 959.3 529.4 970.4 531.1 C981.4 532.7 976.0 531.9 986.7 533.7 C997.3 535.6 992.1 534.6 1002.3 536.7 C1012.5 538.8 1007.5 537.7 1017.2 540.0 C1026.8 542.2 1022.1 541.0 1031.2 543.5 C1040.2 545.9 1035.9 544.7 1044.3 547.3 C1052.8 549.9 1048.7 548.5 1056.5 551.3 C1064.3 554.1 1060.6 552.7 1067.7 555.6 C1074.8 558.5 1071.4 557.0 1077.8 560.0 C1084.3 563.1 1081.2 561.5 1086.9 564.7 C1092.6 567.9 1089.9 566.3 1094.8 569.5 C1099.7 572.8 1097.5 571.2 1101.6 574.5 C1105.7 577.9 1103.9 576.2 1107.2 579.6 C1110.5 583.1 1109.1 581.3 1111.6 584.8 C1114.1 588.3 1113.0 586.6 1114.7 590.1 C1116.4 593.7 1115.7 591.9 1116.6 595.5 C1117.4 599.1 1117.0 599.1 1117.2 600.9" stroke="#8a93a8" opacity=".85"/>
<path d="M812.3 281.5 C814.9 281.7 814.9 281.3 820.0 282.1 C825.1 282.9 822.6 282.3 827.6 284.0 C832.5 285.6 830.1 284.6 834.9 287.1 C839.8 289.6 837.4 288.1 842.1 291.4 C846.8 294.7 844.5 292.9 849.1 297.0 C853.6 301.1 851.4 298.8 855.7 303.7 C860.1 308.6 858.0 306.0 862.1 311.6 C866.3 317.2 864.3 314.2 868.2 320.6 C872.1 327.0 870.2 323.6 873.9 330.7 C877.6 337.8 875.8 334.1 879.3 341.8 C882.7 349.6 881.0 345.6 884.2 354.0 C887.4 362.4 885.9 358.0 888.7 367.1 C891.6 376.1 890.3 371.4 892.9 381.0 C895.4 390.6 894.2 385.7 896.5 395.8 C898.8 405.9 897.7 400.7 899.7 411.3 C901.7 421.9 900.8 416.5 902.4 427.6 C904.0 438.6 903.3 433.0 904.6 444.4 C905.9 455.9 905.3 450.1 906.3 461.9 C907.3 473.6 906.9 467.7 907.5 479.8 C908.1 491.8 907.9 485.7 908.2 498.1 C908.5 510.4 908.4 504.2 908.4 516.7 C908.3 529.2 908.4 522.9 908.0 535.5 C907.6 548.2 907.9 541.9 907.1 554.6 C906.4 567.3 906.8 560.9 905.7 573.7 C904.7 586.4 905.3 580.1 903.9 592.8 C902.4 605.5 903.2 599.2 901.5 611.8 C899.7 624.5 900.7 618.2 898.6 630.7 C896.5 643.2 897.6 637.0 895.2 649.3 C892.8 661.6 894.1 655.6 891.4 667.6 C888.7 679.7 890.1 673.7 887.1 685.5 C884.2 697.3 885.7 691.5 882.5 702.9 C879.2 714.4 880.9 708.8 877.4 719.8 C873.8 730.8 875.6 725.4 871.9 736.0 C868.1 746.6 870.0 741.5 866.0 751.6 C862.0 761.7 864.1 756.8 859.8 766.4 C855.6 775.9 857.8 771.3 853.3 780.3 C848.9 789.3 851.2 785.0 846.6 793.4 C842.0 801.8 844.3 797.8 839.5 805.5 C834.8 813.3 837.2 809.6 832.3 816.7 C827.4 823.7 829.8 820.4 824.8 826.8 C819.8 833.1 822.3 830.1 817.2 835.8 C812.1 841.4 814.7 838.8 809.5 843.7 C804.3 848.5 806.9 846.3 801.6 850.4 C796.4 854.5 799.0 852.7 793.7 856.0 C788.5 859.3 791.1 857.8 785.8 860.3 C780.5 862.8 783.2 861.8 777.9 863.4 C772.6 865.1 775.3 864.5 770.0 865.3 C764.8 866.1 764.8 865.7 762.2 865.9" stroke="#8c8cae" opacity=".85"/>
</g>
<path d="M836.0 324.5 C841.4 324.5 842.9 324.5 848.0 326.5 C853.1 328.5 853.9 328.0 858.0 333.0 C862.1 338.0 863.4 340.5 865.5 348.0 C867.6 355.5 866.1 359.2 867.0 365.0 C867.9 370.8 869.0 368.8 869.5 373.0 C870.0 377.2 870.3 378.6 869.0 383.0 C867.7 387.4 866.6 389.0 864.0 392.0 C861.4 395.0 860.0 393.4 858.0 396.0 C856.0 398.6 856.0 398.3 855.5 403.0 C855.0 407.7 853.5 411.6 856.0 416.0 C858.5 420.4 861.6 419.4 866.0 422.0 C870.4 424.6 869.4 424.2 875.0 427.0 C880.6 429.8 884.2 430.7 890.0 434.0 C895.8 437.3 896.1 436.8 900.0 441.0 C903.9 445.2 903.9 444.3 906.5 452.0 C909.1 459.7 910.2 464.0 911.0 474.0 C911.8 484.0 910.7 486.4 910.0 495.0 C909.3 503.6 908.5 500.5 908.0 511.0 C907.5 521.5 908.8 529.4 908.0 540.0 C907.2 550.6 907.3 550.3 904.6 556.4 C901.9 562.5 899.8 562.1 896.4 566.2 C893.0 570.3 891.5 565.6 890.0 574.0 C888.5 582.4 890.0 591.7 890.0 602.0 C890.0 612.3 890.0 607.7 890.0 618.0 C890.0 628.3 890.8 633.0 890.0 646.0 C889.2 659.0 888.1 660.8 886.4 673.6 C884.7 686.4 884.0 689.5 882.7 701.0 C881.4 712.5 880.3 713.4 881.0 722.7 C881.7 732.0 883.0 732.5 885.5 741.0 C888.0 749.5 889.7 749.3 891.8 759.0 C893.9 768.7 893.6 770.8 894.5 782.7 C895.4 794.6 895.3 798.5 895.5 810.0 C895.7 821.5 894.7 824.6 895.5 831.8 C896.3 839.0 898.6 835.7 899.0 841.0 C899.4 846.3 899.0 847.5 897.3 854.5 C895.6 861.5 894.3 865.0 891.8 871.0 C889.3 877.0 889.2 876.4 886.4 880.0 C883.6 883.6 883.4 884.1 880.0 886.4 C876.6 888.7 876.0 888.9 871.8 890.0 C867.6 891.1 866.3 891.8 861.8 891.0 C857.3 890.2 854.8 889.6 852.7 886.4 C850.6 883.2 851.2 882.2 852.7 877.3 C854.2 872.4 855.6 870.8 859.0 865.5 C862.4 860.2 864.3 859.6 867.3 854.5 C870.3 849.4 871.0 848.9 871.8 843.6 C872.6 838.3 872.2 841.7 870.9 831.8 C869.6 821.9 869.2 813.3 866.4 801.0 C863.6 788.7 862.4 788.8 859.0 779.0 C855.6 769.2 856.0 769.6 851.8 759.0 C847.6 748.4 844.8 745.0 841.0 733.6 C837.2 722.2 837.6 721.9 835.5 710.0 C833.4 698.1 833.5 695.0 831.8 682.7 C830.1 670.4 829.9 657.3 828.2 657.3 C826.5 657.3 826.4 670.4 824.5 682.7 C822.6 695.0 822.5 698.1 820.0 710.0 C817.5 721.9 815.9 723.0 813.6 733.6 C811.3 744.2 811.3 744.0 810.0 755.5 C808.7 767.0 809.0 772.1 808.0 782.7 C807.0 793.3 805.4 793.2 805.5 801.0 C805.6 808.8 808.3 810.1 808.5 816.0 C808.7 821.9 808.6 821.6 806.4 826.4 C804.2 831.2 802.0 830.7 799.0 836.4 C796.0 842.1 796.5 845.5 793.6 851.0 C790.7 856.5 789.6 856.0 786.4 860.0 C783.2 864.0 783.8 866.5 780.0 868.0 C776.2 869.5 773.6 868.3 770.0 866.4 C766.4 864.5 766.2 863.6 764.5 860.0 C762.8 856.4 761.8 855.9 762.7 851.0 C763.6 846.1 764.2 844.7 768.2 839.0 C772.2 833.3 775.8 831.7 780.0 826.4 C784.2 821.1 785.1 820.2 786.4 816.4 C787.7 812.6 786.6 814.5 785.5 810.0 C784.4 805.5 784.1 805.5 781.8 797.0 C779.5 788.5 777.6 785.0 775.5 773.6 C773.4 762.2 772.5 758.6 772.7 748.0 C772.9 737.4 776.4 739.0 776.4 728.0 C776.4 717.0 774.2 713.7 772.7 701.0 C771.2 688.3 770.9 688.5 770.0 673.6 C769.1 658.7 768.6 651.8 769.0 637.0 C769.4 622.2 769.9 620.3 771.8 610.0 C773.7 599.7 774.9 603.5 777.0 593.0 C779.1 582.5 780.5 579.9 781.0 565.0 C781.5 550.1 781.6 542.4 779.0 529.0 C776.4 515.6 775.8 508.0 770.0 507.5 C764.2 507.0 758.7 520.4 754.0 527.0 C749.3 533.6 753.3 531.9 750.0 536.0 C746.7 540.1 744.0 542.6 740.0 544.5 C736.0 546.4 736.3 545.0 733.0 544.0 C729.7 543.0 728.8 542.6 726.0 540.0 C723.2 537.4 724.3 534.6 721.0 533.0 C717.7 531.4 715.2 533.8 712.0 533.0 C708.8 532.2 708.7 531.8 707.3 529.7 C705.9 527.6 705.0 527.1 706.0 524.0 C707.0 520.9 710.4 519.9 711.8 516.6 C713.2 513.3 710.7 512.7 712.0 510.0 C713.3 507.3 715.4 507.8 717.5 505.2 C719.6 502.6 718.9 501.1 721.0 499.0 C723.1 496.9 723.7 497.4 726.5 496.2 C729.3 495.0 729.9 495.4 733.0 494.0 C736.1 492.6 736.6 492.0 740.0 490.0 C743.4 488.0 745.5 487.8 747.4 485.5 C749.3 483.2 746.9 485.5 748.0 480.0 C749.1 474.5 749.4 470.5 752.0 462.0 C754.6 453.5 755.6 449.3 759.0 443.5 C762.4 437.7 762.3 440.3 766.5 437.0 C770.7 433.7 772.6 431.5 777.0 429.5 C781.4 427.5 777.6 430.6 785.5 428.5 C793.4 426.4 805.6 424.1 811.0 420.5 C816.4 416.9 809.4 416.3 808.5 413.0 C807.6 409.7 808.2 411.3 807.0 406.5 C805.8 401.7 805.0 400.2 803.5 392.5 C802.0 384.8 800.6 382.9 800.7 373.5 C800.8 364.1 802.2 359.8 803.9 352.0 C805.6 344.2 805.5 344.4 808.0 340.0 C810.5 335.6 810.7 336.1 814.7 333.0 C818.7 329.9 820.0 328.5 825.0 326.5 C830.0 324.5 830.6 324.5 836.0 324.5 Z" fill="#dcd8d6"/>
<g clip-path="url(#cbody)">
<path d="M836.0 324.5 C841.4 324.5 842.9 324.5 848.0 326.5 C853.1 328.5 853.9 328.0 858.0 333.0 C862.1 338.0 863.4 340.5 865.5 348.0 C867.6 355.5 866.1 359.2 867.0 365.0 C867.9 370.8 869.0 368.8 869.5 373.0 C870.0 377.2 870.3 378.6 869.0 383.0 C867.7 387.4 866.6 389.0 864.0 392.0 C861.4 395.0 860.0 393.4 858.0 396.0 C856.0 398.6 856.0 398.3 855.5 403.0 C855.0 407.7 853.5 411.6 856.0 416.0 C858.5 420.4 861.6 419.4 866.0 422.0 C870.4 424.6 869.4 424.2 875.0 427.0 C880.6 429.8 884.2 430.7 890.0 434.0 C895.8 437.3 896.1 436.8 900.0 441.0 C903.9 445.2 903.9 444.3 906.5 452.0 C909.1 459.7 910.2 464.0 911.0 474.0 C911.8 484.0 910.7 486.4 910.0 495.0 C909.3 503.6 908.5 500.5 908.0 511.0 C907.5 521.5 908.8 529.4 908.0 540.0 C907.2 550.6 907.3 550.3 904.6 556.4 C901.9 562.5 899.8 562.1 896.4 566.2 C893.0 570.3 891.5 565.6 890.0 574.0 C888.5 582.4 890.0 591.7 890.0 602.0 C890.0 612.3 890.0 607.7 890.0 618.0 C890.0 628.3 890.8 633.0 890.0 646.0 C889.2 659.0 888.1 660.8 886.4 673.6 C884.7 686.4 884.0 689.5 882.7 701.0 C881.4 712.5 880.3 713.4 881.0 722.7 C881.7 732.0 883.0 732.5 885.5 741.0 C888.0 749.5 889.7 749.3 891.8 759.0 C893.9 768.7 893.6 770.8 894.5 782.7 C895.4 794.6 895.3 798.5 895.5 810.0 C895.7 821.5 894.7 824.6 895.5 831.8 C896.3 839.0 898.6 835.7 899.0 841.0 C899.4 846.3 899.0 847.5 897.3 854.5 C895.6 861.5 894.3 865.0 891.8 871.0 C889.3 877.0 889.2 876.4 886.4 880.0 C883.6 883.6 883.4 884.1 880.0 886.4 C876.6 888.7 876.0 888.9 871.8 890.0 C867.6 891.1 866.3 891.8 861.8 891.0 C857.3 890.2 854.8 889.6 852.7 886.4 C850.6 883.2 851.2 882.2 852.7 877.3 C854.2 872.4 855.6 870.8 859.0 865.5 C862.4 860.2 864.3 859.6 867.3 854.5 C870.3 849.4 871.0 848.9 871.8 843.6 C872.6 838.3 872.2 841.7 870.9 831.8 C869.6 821.9 869.2 813.3 866.4 801.0 C863.6 788.7 862.4 788.8 859.0 779.0 C855.6 769.2 856.0 769.6 851.8 759.0 C847.6 748.4 844.8 745.0 841.0 733.6 C837.2 722.2 837.6 721.9 835.5 710.0 C833.4 698.1 833.5 695.0 831.8 682.7 C830.1 670.4 829.9 657.3 828.2 657.3 C826.5 657.3 826.4 670.4 824.5 682.7 C822.6 695.0 822.5 698.1 820.0 710.0 C817.5 721.9 815.9 723.0 813.6 733.6 C811.3 744.2 811.3 744.0 810.0 755.5 C808.7 767.0 809.0 772.1 808.0 782.7 C807.0 793.3 805.4 793.2 805.5 801.0 C805.6 808.8 808.3 810.1 808.5 816.0 C808.7 821.9 808.6 821.6 806.4 826.4 C804.2 831.2 802.0 830.7 799.0 836.4 C796.0 842.1 796.5 845.5 793.6 851.0 C790.7 856.5 789.6 856.0 786.4 860.0 C783.2 864.0 783.8 866.5 780.0 868.0 C776.2 869.5 773.6 868.3 770.0 866.4 C766.4 864.5 766.2 863.6 764.5 860.0 C762.8 856.4 761.8 855.9 762.7 851.0 C763.6 846.1 764.2 844.7 768.2 839.0 C772.2 833.3 775.8 831.7 780.0 826.4 C784.2 821.1 785.1 820.2 786.4 816.4 C787.7 812.6 786.6 814.5 785.5 810.0 C784.4 805.5 784.1 805.5 781.8 797.0 C779.5 788.5 777.6 785.0 775.5 773.6 C773.4 762.2 772.5 758.6 772.7 748.0 C772.9 737.4 776.4 739.0 776.4 728.0 C776.4 717.0 774.2 713.7 772.7 701.0 C771.2 688.3 770.9 688.5 770.0 673.6 C769.1 658.7 768.6 651.8 769.0 637.0 C769.4 622.2 769.9 620.3 771.8 610.0 C773.7 599.7 774.9 603.5 777.0 593.0 C779.1 582.5 780.5 579.9 781.0 565.0 C781.5 550.1 781.6 542.4 779.0 529.0 C776.4 515.6 775.8 508.0 770.0 507.5 C764.2 507.0 758.7 520.4 754.0 527.0 C749.3 533.6 753.3 531.9 750.0 536.0 C746.7 540.1 744.0 542.6 740.0 544.5 C736.0 546.4 736.3 545.0 733.0 544.0 C729.7 543.0 728.8 542.6 726.0 540.0 C723.2 537.4 724.3 534.6 721.0 533.0 C717.7 531.4 715.2 533.8 712.0 533.0 C708.8 532.2 708.7 531.8 707.3 529.7 C705.9 527.6 705.0 527.1 706.0 524.0 C707.0 520.9 710.4 519.9 711.8 516.6 C713.2 513.3 710.7 512.7 712.0 510.0 C713.3 507.3 715.4 507.8 717.5 505.2 C719.6 502.6 718.9 501.1 721.0 499.0 C723.1 496.9 723.7 497.4 726.5 496.2 C729.3 495.0 729.9 495.4 733.0 494.0 C736.1 492.6 736.6 492.0 740.0 490.0 C743.4 488.0 745.5 487.8 747.4 485.5 C749.3 483.2 746.9 485.5 748.0 480.0 C749.1 474.5 749.4 470.5 752.0 462.0 C754.6 453.5 755.6 449.3 759.0 443.5 C762.4 437.7 762.3 440.3 766.5 437.0 C770.7 433.7 772.6 431.5 777.0 429.5 C781.4 427.5 777.6 430.6 785.5 428.5 C793.4 426.4 805.6 424.1 811.0 420.5 C816.4 416.9 809.4 416.3 808.5 413.0 C807.6 409.7 808.2 411.3 807.0 406.5 C805.8 401.7 805.0 400.2 803.5 392.5 C802.0 384.8 800.6 382.9 800.7 373.5 C800.8 364.1 802.2 359.8 803.9 352.0 C805.6 344.2 805.5 344.4 808.0 340.0 C810.5 335.6 810.7 336.1 814.7 333.0 C818.7 329.9 820.0 328.5 825.0 326.5 C830.0 324.5 830.6 324.5 836.0 324.5 Z" fill="none" stroke="#b9b2b5" stroke-width="17" opacity=".55"/>
<path d="M836.0 324.5 C841.4 324.5 842.9 324.5 848.0 326.5 C853.1 328.5 853.9 328.0 858.0 333.0 C862.1 338.0 863.4 340.5 865.5 348.0 C867.6 355.5 866.1 359.2 867.0 365.0 C867.9 370.8 869.0 368.8 869.5 373.0 C870.0 377.2 870.3 378.6 869.0 383.0 C867.7 387.4 866.6 389.0 864.0 392.0 C861.4 395.0 860.0 393.4 858.0 396.0 C856.0 398.6 856.0 398.3 855.5 403.0 C855.0 407.7 853.5 411.6 856.0 416.0 C858.5 420.4 861.6 419.4 866.0 422.0 C870.4 424.6 869.4 424.2 875.0 427.0 C880.6 429.8 884.2 430.7 890.0 434.0 C895.8 437.3 896.1 436.8 900.0 441.0 C903.9 445.2 903.9 444.3 906.5 452.0 C909.1 459.7 910.2 464.0 911.0 474.0 C911.8 484.0 910.7 486.4 910.0 495.0 C909.3 503.6 908.5 500.5 908.0 511.0 C907.5 521.5 908.8 529.4 908.0 540.0 C907.2 550.6 907.3 550.3 904.6 556.4 C901.9 562.5 899.8 562.1 896.4 566.2 C893.0 570.3 891.5 565.6 890.0 574.0 C888.5 582.4 890.0 591.7 890.0 602.0 C890.0 612.3 890.0 607.7 890.0 618.0 C890.0 628.3 890.8 633.0 890.0 646.0 C889.2 659.0 888.1 660.8 886.4 673.6 C884.7 686.4 884.0 689.5 882.7 701.0 C881.4 712.5 880.3 713.4 881.0 722.7 C881.7 732.0 883.0 732.5 885.5 741.0 C888.0 749.5 889.7 749.3 891.8 759.0 C893.9 768.7 893.6 770.8 894.5 782.7 C895.4 794.6 895.3 798.5 895.5 810.0 C895.7 821.5 894.7 824.6 895.5 831.8 C896.3 839.0 898.6 835.7 899.0 841.0 C899.4 846.3 899.0 847.5 897.3 854.5 C895.6 861.5 894.3 865.0 891.8 871.0 C889.3 877.0 889.2 876.4 886.4 880.0 C883.6 883.6 883.4 884.1 880.0 886.4 C876.6 888.7 876.0 888.9 871.8 890.0 C867.6 891.1 866.3 891.8 861.8 891.0 C857.3 890.2 854.8 889.6 852.7 886.4 C850.6 883.2 851.2 882.2 852.7 877.3 C854.2 872.4 855.6 870.8 859.0 865.5 C862.4 860.2 864.3 859.6 867.3 854.5 C870.3 849.4 871.0 848.9 871.8 843.6 C872.6 838.3 872.2 841.7 870.9 831.8 C869.6 821.9 869.2 813.3 866.4 801.0 C863.6 788.7 862.4 788.8 859.0 779.0 C855.6 769.2 856.0 769.6 851.8 759.0 C847.6 748.4 844.8 745.0 841.0 733.6 C837.2 722.2 837.6 721.9 835.5 710.0 C833.4 698.1 833.5 695.0 831.8 682.7 C830.1 670.4 829.9 657.3 828.2 657.3 C826.5 657.3 826.4 670.4 824.5 682.7 C822.6 695.0 822.5 698.1 820.0 710.0 C817.5 721.9 815.9 723.0 813.6 733.6 C811.3 744.2 811.3 744.0 810.0 755.5 C808.7 767.0 809.0 772.1 808.0 782.7 C807.0 793.3 805.4 793.2 805.5 801.0 C805.6 808.8 808.3 810.1 808.5 816.0 C808.7 821.9 808.6 821.6 806.4 826.4 C804.2 831.2 802.0 830.7 799.0 836.4 C796.0 842.1 796.5 845.5 793.6 851.0 C790.7 856.5 789.6 856.0 786.4 860.0 C783.2 864.0 783.8 866.5 780.0 868.0 C776.2 869.5 773.6 868.3 770.0 866.4 C766.4 864.5 766.2 863.6 764.5 860.0 C762.8 856.4 761.8 855.9 762.7 851.0 C763.6 846.1 764.2 844.7 768.2 839.0 C772.2 833.3 775.8 831.7 780.0 826.4 C784.2 821.1 785.1 820.2 786.4 816.4 C787.7 812.6 786.6 814.5 785.5 810.0 C784.4 805.5 784.1 805.5 781.8 797.0 C779.5 788.5 777.6 785.0 775.5 773.6 C773.4 762.2 772.5 758.6 772.7 748.0 C772.9 737.4 776.4 739.0 776.4 728.0 C776.4 717.0 774.2 713.7 772.7 701.0 C771.2 688.3 770.9 688.5 770.0 673.6 C769.1 658.7 768.6 651.8 769.0 637.0 C769.4 622.2 769.9 620.3 771.8 610.0 C773.7 599.7 774.9 603.5 777.0 593.0 C779.1 582.5 780.5 579.9 781.0 565.0 C781.5 550.1 781.6 542.4 779.0 529.0 C776.4 515.6 775.8 508.0 770.0 507.5 C764.2 507.0 758.7 520.4 754.0 527.0 C749.3 533.6 753.3 531.9 750.0 536.0 C746.7 540.1 744.0 542.6 740.0 544.5 C736.0 546.4 736.3 545.0 733.0 544.0 C729.7 543.0 728.8 542.6 726.0 540.0 C723.2 537.4 724.3 534.6 721.0 533.0 C717.7 531.4 715.2 533.8 712.0 533.0 C708.8 532.2 708.7 531.8 707.3 529.7 C705.9 527.6 705.0 527.1 706.0 524.0 C707.0 520.9 710.4 519.9 711.8 516.6 C713.2 513.3 710.7 512.7 712.0 510.0 C713.3 507.3 715.4 507.8 717.5 505.2 C719.6 502.6 718.9 501.1 721.0 499.0 C723.1 496.9 723.7 497.4 726.5 496.2 C729.3 495.0 729.9 495.4 733.0 494.0 C736.1 492.6 736.6 492.0 740.0 490.0 C743.4 488.0 745.5 487.8 747.4 485.5 C749.3 483.2 746.9 485.5 748.0 480.0 C749.1 474.5 749.4 470.5 752.0 462.0 C754.6 453.5 755.6 449.3 759.0 443.5 C762.4 437.7 762.3 440.3 766.5 437.0 C770.7 433.7 772.6 431.5 777.0 429.5 C781.4 427.5 777.6 430.6 785.5 428.5 C793.4 426.4 805.6 424.1 811.0 420.5 C816.4 416.9 809.4 416.3 808.5 413.0 C807.6 409.7 808.2 411.3 807.0 406.5 C805.8 401.7 805.0 400.2 803.5 392.5 C802.0 384.8 800.6 382.9 800.7 373.5 C800.8 364.1 802.2 359.8 803.9 352.0 C805.6 344.2 805.5 344.4 808.0 340.0 C810.5 335.6 810.7 336.1 814.7 333.0 C818.7 329.9 820.0 328.5 825.0 326.5 C830.0 324.5 830.6 324.5 836.0 324.5 Z" fill="none" stroke="#9c949a" stroke-width="8" opacity=".5"/>
<path d="M828.2 657 L824.5 682.7 L820 710 L813.6 733.6 L810 755.5 L808 782.7" fill="none" stroke="#9c949a" stroke-width="7" opacity=".35"/>
<path d="M828.2 657 L831.8 682.7 L835.5 710 L841 733.6 L851.8 759 L859 779 L866.4 801" fill="none" stroke="#9c949a" stroke-width="7" opacity=".35"/>
<path d="M771 462 L771 507" fill="none" stroke="#8e868c" stroke-width="2.4" opacity=".5"/>
<path d="M811 420.5 L856 416 L866 422 L850 431 L830 433 L812 428 Z" fill="#c2b6b8" opacity=".55"/>
<path d="M806 560 Q830 548 856 556 L868 600 Q850 640 828 657 Q812 640 800 610 Z" fill="#efedeb" opacity=".5"/>
<path d="M806 662 L804 673 L801 710 L796 748 L795 783 L797 812" fill="none" stroke="#bdb7ba" stroke-width="8" opacity=".55"/>
<path d="M852 662 L852 673 L853 710 L860 741 L872 779 L878 810 L882 835" fill="none" stroke="#bdb7ba" stroke-width="8" opacity=".55"/>
<path d="M786 818 L808 818 L806 828 L798 840 L790 856 L780 868 L768 866 L762 852 L768 838 L780 826 Z" fill="#8e888e" opacity=".32"/>
<path d="M871 832 L896 832 L899 842 L896 858 L888 876 L876 888 L862 891 L852 884 L854 874 L862 860 L870 846 Z" fill="#8e888e" opacity=".28"/>
<path d="M763 852 Q764 862 772 866.5 L781 868 L784 862 Q774 860 768 850 Z" fill="#c9a3a3" opacity=".9"/>
<path d="M853 878 Q853 887 862 891 L874 890 L884 883 L880 879 Q870 886 858 880 Z" fill="#cfa9a7" opacity=".9"/>
<rect x="740" y="320" width="180" height="580" fill="url(#pd2)" clip-path="url(#chead)"/>
<rect x="740" y="320" width="180" height="580" fill="url(#pd1)" clip-path="url(#ctorso)"/>
<rect x="740" y="320" width="180" height="580" fill="url(#pd3)" clip-path="url(#clegs)"/>
<path d="M828.5 560.5 C830.4 557.1 840.3 564.2 847.3 563.0 C854.3 561.8 858.7 557.7 863.6 554.7 C868.5 551.7 869.1 551.5 871.8 548.2 C874.5 544.9 875.0 543.2 877.0 538.0 C879.0 532.8 878.0 525.6 882.0 522.0 C886.0 518.4 891.8 516.4 897.0 520.0 C902.2 523.6 906.5 532.7 908.0 540.0 C909.5 547.3 906.9 551.2 904.6 556.4 C902.3 561.6 899.7 562.9 896.4 566.2 C893.1 569.5 893.1 570.2 888.2 572.7 C883.3 575.2 878.3 575.9 871.8 578.5 C865.3 581.1 861.7 581.7 855.5 585.8 C849.3 589.9 845.0 597.0 840.7 599.0 C836.4 601.0 834.5 599.8 834.0 596.0 C833.5 592.2 839.1 587.1 838.0 580.0 C836.9 572.9 826.6 563.9 828.5 560.5 Z" fill="#d6cccc"/>
<path d="M828.5 560.5 C830.4 557.1 840.3 564.2 847.3 563.0 C854.3 561.8 858.7 557.7 863.6 554.7 C868.5 551.7 869.1 551.5 871.8 548.2 C874.5 544.9 875.0 543.2 877.0 538.0 C879.0 532.8 878.0 525.6 882.0 522.0 C886.0 518.4 891.8 516.4 897.0 520.0 C902.2 523.6 906.5 532.7 908.0 540.0 C909.5 547.3 906.9 551.2 904.6 556.4 C902.3 561.6 899.7 562.9 896.4 566.2 C893.1 569.5 893.1 570.2 888.2 572.7 C883.3 575.2 878.3 575.9 871.8 578.5 C865.3 581.1 861.7 581.7 855.5 585.8 C849.3 589.9 845.0 597.0 840.7 599.0 C836.4 601.0 834.5 599.8 834.0 596.0 C833.5 592.2 839.1 587.1 838.0 580.0 C836.9 572.9 826.6 563.9 828.5 560.5 Z" fill="url(#pd4)"/>
<path d="M877 538 L871.8 548.2 L863.6 554.7 L847.3 563 L828.5 560.5" fill="none" stroke="#5e5058" stroke-width="1.6" stroke-dasharray="1.6 1.2"/>
<path d="M888.2 572.7 L871.8 578.5 L855.5 585.8 L840.7 599" fill="none" stroke="#5e5058" stroke-width="1.6" stroke-dasharray="1.6 1.2"/>
<path d="M824.4 563.0 C827.4 561.4 831.4 561.9 836.0 562.0 C840.6 562.1 844.1 561.5 847.3 563.5 C850.5 565.5 851.5 567.5 852.0 572.0 C852.5 576.5 852.3 580.6 850.0 586.0 C847.7 591.4 843.9 596.2 840.7 599.0 C837.5 601.8 836.5 601.0 834.0 600.0 C831.5 599.0 829.6 598.0 828.0 594.0 C826.4 590.0 827.4 584.8 826.0 580.0 C824.6 575.2 821.3 573.4 821.0 570.0 C820.7 566.6 821.4 564.6 824.4 563.0 Z" fill="#b09aa0"/>
<path d="M824.4 563.0 C827.4 561.4 831.4 561.9 836.0 562.0 C840.6 562.1 844.1 561.5 847.3 563.5 C850.5 565.5 851.5 567.5 852.0 572.0 C852.5 576.5 852.3 580.6 850.0 586.0 C847.7 591.4 843.9 596.2 840.7 599.0 C837.5 601.8 836.5 601.0 834.0 600.0 C831.5 599.0 829.6 598.0 828.0 594.0 C826.4 590.0 827.4 584.8 826.0 580.0 C824.6 575.2 821.3 573.4 821.0 570.0 C820.7 566.6 821.4 564.6 824.4 563.0 Z" fill="url(#pd4)" opacity=".9"/>
<path d="M803.9 560.5 L824.4 567.0" stroke="#6a545c" stroke-width="9.2" stroke-linecap="round" opacity=".75"/>
<path d="M798.6 587.5 L826.8 577.0" stroke="#6a545c" stroke-width="9.0" stroke-linecap="round" opacity=".75"/>
<path d="M801.0 603.0 L829.3 589.5" stroke="#6a545c" stroke-width="9.0" stroke-linecap="round" opacity=".75"/>
<path d="M809.0 611.6 L834.2 596.5" stroke="#6a545c" stroke-width="8.6" stroke-linecap="round" opacity=".75"/>
<path d="M819.8 618.0 L839.0 600.5" stroke="#6a545c" stroke-width="8.0" stroke-linecap="round" opacity=".75"/>
<path d="M803.9 560.5 L824.4 567.0" stroke="#caa4a6" stroke-width="7.6" stroke-linecap="round"/>
<path d="M798.6 587.5 L826.8 577.0" stroke="#caa4a6" stroke-width="7.4" stroke-linecap="round"/>
<path d="M801.0 603.0 L829.3 589.5" stroke="#caa4a6" stroke-width="7.4" stroke-linecap="round"/>
<path d="M809.0 611.6 L834.2 596.5" stroke="#caa4a6" stroke-width="7.0" stroke-linecap="round"/>
<path d="M819.8 618.0 L839.0 600.5" stroke="#caa4a6" stroke-width="6.4" stroke-linecap="round"/>
<circle cx="804.5" cy="560.3" r="2.8" fill="#dcb8b8"/>
<circle cx="799.2" cy="587.3" r="2.7" fill="#dcb8b8"/>
<circle cx="801.6" cy="602.8" r="2.7" fill="#dcb8b8"/>
<circle cx="809.6" cy="611.4" r="2.5" fill="#dcb8b8"/>
<circle cx="820.4" cy="617.8" r="2.2" fill="#dcb8b8"/>
<path d="M824.4 567 L826.8 577 L829.3 589.5 L834.2 596.5 L839 600.5 L846 590 L848 572 L838 563 Z" fill="#b09aa0" opacity=".9"/>
<path d="M824.4 567 L826.8 577 L829.3 589.5 L834.2 596.5 L839 600.5 L846 590 L848 572 L838 563 Z" fill="url(#pd4)" opacity=".9"/>
<path d="M802.5 364.0 C805.1 361.4 806.5 365.7 812.0 367.0 C817.5 368.3 819.9 367.6 826.0 369.5 C832.1 371.4 833.8 371.6 838.0 375.0 C842.2 378.4 842.8 378.2 844.0 384.0 C845.2 389.8 844.4 393.5 843.0 400.0 C841.6 406.5 840.8 407.7 838.0 412.0 C835.2 416.3 835.8 416.9 831.0 418.5 C826.2 420.1 822.2 419.7 817.5 418.8 C812.8 417.9 813.5 417.4 811.0 414.5 C808.5 411.6 808.8 411.6 807.0 406.5 C805.2 401.4 804.9 399.1 803.5 392.5 C802.1 385.9 801.1 384.6 800.9 378.0 C800.7 371.4 799.9 366.6 802.5 364.0 Z" fill="url(#gface)"/>
<path d="M859.0 375.0 C861.9 372.3 867.2 370.6 869.5 372.5 C871.8 374.4 870.4 378.3 869.0 383.0 C867.6 387.7 866.1 390.2 863.5 392.5 C860.9 394.8 859.5 395.0 858.0 393.0 C856.5 391.0 856.8 388.2 857.0 384.0 C857.2 379.8 856.1 377.7 859.0 375.0 Z" fill="#c79f9c"/>
<path d="M860 378 Q866 376 866 384 Q864 389 860 390" fill="none" stroke="#9a7674" stroke-width="1"/>
<path d="M805 372 Q810 370.5 815 373.5" stroke="#8a6866" stroke-width="1.4" fill="none"/>
<path d="M822 374.5 Q829 372.5 836 376.5" stroke="#9a7674" stroke-width="1.3" fill="none"/>
<path d="M814 374 L809.5 388 Q808.5 392.5 812 393.5 L819 393 Q822 392 821 388 Z" fill="#c59c99"/>
<path d="M809.5 390 Q813 394.5 821 392" stroke="#8e6a68" stroke-width="1.3" fill="none"/>
<path d="M814 374 L809.5 389" stroke="#a8827f" stroke-width="1" fill="none"/>
<path d="M810 402 Q817 400.5 828 403.5" stroke="#a47c7a" stroke-width="1.2" fill="none"/>
<path d="M812 409 Q819 412.5 828 409" stroke="#b48e8c" stroke-width="1" fill="none"/>
<path d="M826 384 L844 384 L843 400 L838 412 L831 418.5 L826 412 Z" fill="url(#pd4)" opacity=".8"/>
<path d="M811 420.5 Q820 424 834 421 Q846 417 855.5 408 L856 416 Q840 428 812 424 Z" fill="#7a6468" opacity=".55"/>
<path d="M700 478 L749 478 L751.6 486.4 L741.6 511 L748 519 L754 527 L757 552 L700 552 Z" fill="#a88a8c"/>
<path d="M741.6 511.0 C739.0 510.4 737.7 513.8 735.0 516.0 C732.3 518.2 730.6 519.7 728.0 522.0 C725.4 524.3 723.4 525.3 722.0 527.5 C720.6 529.7 720.2 530.5 721.0 533.0 C721.8 535.5 723.6 537.8 726.0 540.0 C728.4 542.2 730.2 543.1 733.0 544.0 C735.8 544.9 737.2 545.1 740.0 544.5 C742.8 543.9 744.6 543.1 747.0 541.0 C749.4 538.9 750.6 536.8 752.0 534.0 C753.4 531.2 754.8 530.0 754.0 527.0 C753.2 524.0 750.5 522.2 748.0 519.0 C745.5 515.8 744.2 511.6 741.6 511.0 Z" fill="#9a8086"/>
<path d="M741.6 511.0 C739.0 510.4 737.7 513.8 735.0 516.0 C732.3 518.2 730.6 519.7 728.0 522.0 C725.4 524.3 723.4 525.3 722.0 527.5 C720.6 529.7 720.2 530.5 721.0 533.0 C721.8 535.5 723.6 537.8 726.0 540.0 C728.4 542.2 730.2 543.1 733.0 544.0 C735.8 544.9 737.2 545.1 740.0 544.5 C742.8 543.9 744.6 543.1 747.0 541.0 C749.4 538.9 750.6 536.8 752.0 534.0 C753.4 531.2 754.8 530.0 754.0 527.0 C753.2 524.0 750.5 522.2 748.0 519.0 C745.5 515.8 744.2 511.6 741.6 511.0 Z" fill="url(#pm)"/>
<path d="M745.0 489.0 C742.4 490.6 740.2 494.8 737.0 497.0 C733.8 499.2 732.0 498.0 729.0 500.0 C726.0 502.0 724.6 503.8 722.0 507.0 C719.4 510.2 717.8 512.2 716.0 516.0 C714.2 519.8 711.8 523.7 713.0 526.0 C714.2 528.3 719.0 528.3 722.0 527.5 C725.0 526.7 725.4 524.3 728.0 522.0 C730.6 519.7 732.3 518.2 735.0 516.0 C737.7 513.8 739.4 514.2 741.6 511.0 C743.8 507.8 744.3 504.4 746.0 500.0 C747.7 495.6 750.2 491.2 750.0 489.0 C749.8 486.8 747.6 487.4 745.0 489.0 Z" fill="#a48688"/>
<path d="M747.0 486.5 L736.5 498.5" stroke="#cfa9a8" stroke-width="5.2" stroke-linecap="round"/>
<path d="M726.8 496.8 L733.5 506.0" stroke="#be9a9a" stroke-width="5.4" stroke-linecap="round"/>
<path d="M718.0 505.6 L728.0 512.5" stroke="#b89494" stroke-width="5.4" stroke-linecap="round"/>
<path d="M712.4 516.6 L723.5 519.6" stroke="#b49090" stroke-width="5.2" stroke-linecap="round"/>
<path d="M708.0 529.4 L718.5 525.2" stroke="#c09c9c" stroke-width="5.0" stroke-linecap="round"/>
<circle cx="747.0" cy="486.5" r="2.3" fill="#e2c0be"/>
<circle cx="726.8" cy="496.8" r="2.4" fill="#e2c0be"/>
<circle cx="718.0" cy="505.6" r="2.4" fill="#e2c0be"/>
<circle cx="712.4" cy="516.6" r="2.3" fill="#e2c0be"/>
<circle cx="708.0" cy="529.4" r="2.2" fill="#e2c0be"/>
</g>
<path d="M836.0 324.5 C841.4 324.5 842.9 324.5 848.0 326.5 C853.1 328.5 853.9 328.0 858.0 333.0 C862.1 338.0 863.4 340.5 865.5 348.0 C867.6 355.5 866.1 359.2 867.0 365.0 C867.9 370.8 869.0 368.8 869.5 373.0 C870.0 377.2 870.3 378.6 869.0 383.0 C867.7 387.4 866.6 389.0 864.0 392.0 C861.4 395.0 860.0 393.4 858.0 396.0 C856.0 398.6 856.0 398.3 855.5 403.0 C855.0 407.7 853.5 411.6 856.0 416.0 C858.5 420.4 861.6 419.4 866.0 422.0 C870.4 424.6 869.4 424.2 875.0 427.0 C880.6 429.8 884.2 430.7 890.0 434.0 C895.8 437.3 896.1 436.8 900.0 441.0 C903.9 445.2 903.9 444.3 906.5 452.0 C909.1 459.7 910.2 464.0 911.0 474.0 C911.8 484.0 910.7 486.4 910.0 495.0 C909.3 503.6 908.5 500.5 908.0 511.0 C907.5 521.5 908.8 529.4 908.0 540.0 C907.2 550.6 907.3 550.3 904.6 556.4 C901.9 562.5 899.8 562.1 896.4 566.2 C893.0 570.3 891.5 565.6 890.0 574.0 C888.5 582.4 890.0 591.7 890.0 602.0 C890.0 612.3 890.0 607.7 890.0 618.0 C890.0 628.3 890.8 633.0 890.0 646.0 C889.2 659.0 888.1 660.8 886.4 673.6 C884.7 686.4 884.0 689.5 882.7 701.0 C881.4 712.5 880.3 713.4 881.0 722.7 C881.7 732.0 883.0 732.5 885.5 741.0 C888.0 749.5 889.7 749.3 891.8 759.0 C893.9 768.7 893.6 770.8 894.5 782.7 C895.4 794.6 895.3 798.5 895.5 810.0 C895.7 821.5 894.7 824.6 895.5 831.8 C896.3 839.0 898.6 835.7 899.0 841.0 C899.4 846.3 899.0 847.5 897.3 854.5 C895.6 861.5 894.3 865.0 891.8 871.0 C889.3 877.0 889.2 876.4 886.4 880.0 C883.6 883.6 883.4 884.1 880.0 886.4 C876.6 888.7 876.0 888.9 871.8 890.0 C867.6 891.1 866.3 891.8 861.8 891.0 C857.3 890.2 854.8 889.6 852.7 886.4 C850.6 883.2 851.2 882.2 852.7 877.3 C854.2 872.4 855.6 870.8 859.0 865.5 C862.4 860.2 864.3 859.6 867.3 854.5 C870.3 849.4 871.0 848.9 871.8 843.6 C872.6 838.3 872.2 841.7 870.9 831.8 C869.6 821.9 869.2 813.3 866.4 801.0 C863.6 788.7 862.4 788.8 859.0 779.0 C855.6 769.2 856.0 769.6 851.8 759.0 C847.6 748.4 844.8 745.0 841.0 733.6 C837.2 722.2 837.6 721.9 835.5 710.0 C833.4 698.1 833.5 695.0 831.8 682.7 C830.1 670.4 829.9 657.3 828.2 657.3 C826.5 657.3 826.4 670.4 824.5 682.7 C822.6 695.0 822.5 698.1 820.0 710.0 C817.5 721.9 815.9 723.0 813.6 733.6 C811.3 744.2 811.3 744.0 810.0 755.5 C808.7 767.0 809.0 772.1 808.0 782.7 C807.0 793.3 805.4 793.2 805.5 801.0 C805.6 808.8 808.3 810.1 808.5 816.0 C808.7 821.9 808.6 821.6 806.4 826.4 C804.2 831.2 802.0 830.7 799.0 836.4 C796.0 842.1 796.5 845.5 793.6 851.0 C790.7 856.5 789.6 856.0 786.4 860.0 C783.2 864.0 783.8 866.5 780.0 868.0 C776.2 869.5 773.6 868.3 770.0 866.4 C766.4 864.5 766.2 863.6 764.5 860.0 C762.8 856.4 761.8 855.9 762.7 851.0 C763.6 846.1 764.2 844.7 768.2 839.0 C772.2 833.3 775.8 831.7 780.0 826.4 C784.2 821.1 785.1 820.2 786.4 816.4 C787.7 812.6 786.6 814.5 785.5 810.0 C784.4 805.5 784.1 805.5 781.8 797.0 C779.5 788.5 777.6 785.0 775.5 773.6 C773.4 762.2 772.5 758.6 772.7 748.0 C772.9 737.4 776.4 739.0 776.4 728.0 C776.4 717.0 774.2 713.7 772.7 701.0 C771.2 688.3 770.9 688.5 770.0 673.6 C769.1 658.7 768.6 651.8 769.0 637.0 C769.4 622.2 769.9 620.3 771.8 610.0 C773.7 599.7 774.9 603.5 777.0 593.0 C779.1 582.5 780.5 579.9 781.0 565.0 C781.5 550.1 781.6 542.4 779.0 529.0 C776.4 515.6 775.8 508.0 770.0 507.5 C764.2 507.0 758.7 520.4 754.0 527.0 C749.3 533.6 753.3 531.9 750.0 536.0 C746.7 540.1 744.0 542.6 740.0 544.5 C736.0 546.4 736.3 545.0 733.0 544.0 C729.7 543.0 728.8 542.6 726.0 540.0 C723.2 537.4 724.3 534.6 721.0 533.0 C717.7 531.4 715.2 533.8 712.0 533.0 C708.8 532.2 708.7 531.8 707.3 529.7 C705.9 527.6 705.0 527.1 706.0 524.0 C707.0 520.9 710.4 519.9 711.8 516.6 C713.2 513.3 710.7 512.7 712.0 510.0 C713.3 507.3 715.4 507.8 717.5 505.2 C719.6 502.6 718.9 501.1 721.0 499.0 C723.1 496.9 723.7 497.4 726.5 496.2 C729.3 495.0 729.9 495.4 733.0 494.0 C736.1 492.6 736.6 492.0 740.0 490.0 C743.4 488.0 745.5 487.8 747.4 485.5 C749.3 483.2 746.9 485.5 748.0 480.0 C749.1 474.5 749.4 470.5 752.0 462.0 C754.6 453.5 755.6 449.3 759.0 443.5 C762.4 437.7 762.3 440.3 766.5 437.0 C770.7 433.7 772.6 431.5 777.0 429.5 C781.4 427.5 777.6 430.6 785.5 428.5 C793.4 426.4 805.6 424.1 811.0 420.5 C816.4 416.9 809.4 416.3 808.5 413.0 C807.6 409.7 808.2 411.3 807.0 406.5 C805.8 401.7 805.0 400.2 803.5 392.5 C802.0 384.8 800.6 382.9 800.7 373.5 C800.8 364.1 802.2 359.8 803.9 352.0 C805.6 344.2 805.5 344.4 808.0 340.0 C810.5 335.6 810.7 336.1 814.7 333.0 C818.7 329.9 820.0 328.5 825.0 326.5 C830.0 324.5 830.6 324.5 836.0 324.5 Z" fill="none" stroke="#665e6c" stroke-width="2.4" stroke-dasharray="1.4 1.5" opacity=".7"/>
<path d="M836.0 324.5 C841.4 324.5 842.9 324.5 848.0 326.5 C853.1 328.5 853.9 328.0 858.0 333.0 C862.1 338.0 863.4 340.5 865.5 348.0 C867.6 355.5 866.1 359.2 867.0 365.0 C867.9 370.8 869.0 368.8 869.5 373.0 C870.0 377.2 870.3 378.6 869.0 383.0 C867.7 387.4 866.6 389.0 864.0 392.0 C861.4 395.0 860.0 393.4 858.0 396.0 C856.0 398.6 856.0 398.3 855.5 403.0 C855.0 407.7 853.5 411.6 856.0 416.0 C858.5 420.4 861.6 419.4 866.0 422.0 C870.4 424.6 869.4 424.2 875.0 427.0 C880.6 429.8 884.2 430.7 890.0 434.0 C895.8 437.3 896.1 436.8 900.0 441.0 C903.9 445.2 903.9 444.3 906.5 452.0 C909.1 459.7 910.2 464.0 911.0 474.0 C911.8 484.0 910.7 486.4 910.0 495.0 C909.3 503.6 908.5 500.5 908.0 511.0 C907.5 521.5 908.8 529.4 908.0 540.0 C907.2 550.6 907.3 550.3 904.6 556.4 C901.9 562.5 899.8 562.1 896.4 566.2 C893.0 570.3 891.5 565.6 890.0 574.0 C888.5 582.4 890.0 591.7 890.0 602.0 C890.0 612.3 890.0 607.7 890.0 618.0 C890.0 628.3 890.8 633.0 890.0 646.0 C889.2 659.0 888.1 660.8 886.4 673.6 C884.7 686.4 884.0 689.5 882.7 701.0 C881.4 712.5 880.3 713.4 881.0 722.7 C881.7 732.0 883.0 732.5 885.5 741.0 C888.0 749.5 889.7 749.3 891.8 759.0 C893.9 768.7 893.6 770.8 894.5 782.7 C895.4 794.6 895.3 798.5 895.5 810.0 C895.7 821.5 894.7 824.6 895.5 831.8 C896.3 839.0 898.6 835.7 899.0 841.0 C899.4 846.3 899.0 847.5 897.3 854.5 C895.6 861.5 894.3 865.0 891.8 871.0 C889.3 877.0 889.2 876.4 886.4 880.0 C883.6 883.6 883.4 884.1 880.0 886.4 C876.6 888.7 876.0 888.9 871.8 890.0 C867.6 891.1 866.3 891.8 861.8 891.0 C857.3 890.2 854.8 889.6 852.7 886.4 C850.6 883.2 851.2 882.2 852.7 877.3 C854.2 872.4 855.6 870.8 859.0 865.5 C862.4 860.2 864.3 859.6 867.3 854.5 C870.3 849.4 871.0 848.9 871.8 843.6 C872.6 838.3 872.2 841.7 870.9 831.8 C869.6 821.9 869.2 813.3 866.4 801.0 C863.6 788.7 862.4 788.8 859.0 779.0 C855.6 769.2 856.0 769.6 851.8 759.0 C847.6 748.4 844.8 745.0 841.0 733.6 C837.2 722.2 837.6 721.9 835.5 710.0 C833.4 698.1 833.5 695.0 831.8 682.7 C830.1 670.4 829.9 657.3 828.2 657.3 C826.5 657.3 826.4 670.4 824.5 682.7 C822.6 695.0 822.5 698.1 820.0 710.0 C817.5 721.9 815.9 723.0 813.6 733.6 C811.3 744.2 811.3 744.0 810.0 755.5 C808.7 767.0 809.0 772.1 808.0 782.7 C807.0 793.3 805.4 793.2 805.5 801.0 C805.6 808.8 808.3 810.1 808.5 816.0 C808.7 821.9 808.6 821.6 806.4 826.4 C804.2 831.2 802.0 830.7 799.0 836.4 C796.0 842.1 796.5 845.5 793.6 851.0 C790.7 856.5 789.6 856.0 786.4 860.0 C783.2 864.0 783.8 866.5 780.0 868.0 C776.2 869.5 773.6 868.3 770.0 866.4 C766.4 864.5 766.2 863.6 764.5 860.0 C762.8 856.4 761.8 855.9 762.7 851.0 C763.6 846.1 764.2 844.7 768.2 839.0 C772.2 833.3 775.8 831.7 780.0 826.4 C784.2 821.1 785.1 820.2 786.4 816.4 C787.7 812.6 786.6 814.5 785.5 810.0 C784.4 805.5 784.1 805.5 781.8 797.0 C779.5 788.5 777.6 785.0 775.5 773.6 C773.4 762.2 772.5 758.6 772.7 748.0 C772.9 737.4 776.4 739.0 776.4 728.0 C776.4 717.0 774.2 713.7 772.7 701.0 C771.2 688.3 770.9 688.5 770.0 673.6 C769.1 658.7 768.6 651.8 769.0 637.0 C769.4 622.2 769.9 620.3 771.8 610.0 C773.7 599.7 774.9 603.5 777.0 593.0 C779.1 582.5 780.5 579.9 781.0 565.0 C781.5 550.1 781.6 542.4 779.0 529.0 C776.4 515.6 775.8 508.0 770.0 507.5 C764.2 507.0 758.7 520.4 754.0 527.0 C749.3 533.6 753.3 531.9 750.0 536.0 C746.7 540.1 744.0 542.6 740.0 544.5 C736.0 546.4 736.3 545.0 733.0 544.0 C729.7 543.0 728.8 542.6 726.0 540.0 C723.2 537.4 724.3 534.6 721.0 533.0 C717.7 531.4 715.2 533.8 712.0 533.0 C708.8 532.2 708.7 531.8 707.3 529.7 C705.9 527.6 705.0 527.1 706.0 524.0 C707.0 520.9 710.4 519.9 711.8 516.6 C713.2 513.3 710.7 512.7 712.0 510.0 C713.3 507.3 715.4 507.8 717.5 505.2 C719.6 502.6 718.9 501.1 721.0 499.0 C723.1 496.9 723.7 497.4 726.5 496.2 C729.3 495.0 729.9 495.4 733.0 494.0 C736.1 492.6 736.6 492.0 740.0 490.0 C743.4 488.0 745.5 487.8 747.4 485.5 C749.3 483.2 746.9 485.5 748.0 480.0 C749.1 474.5 749.4 470.5 752.0 462.0 C754.6 453.5 755.6 449.3 759.0 443.5 C762.4 437.7 762.3 440.3 766.5 437.0 C770.7 433.7 772.6 431.5 777.0 429.5 C781.4 427.5 777.6 430.6 785.5 428.5 C793.4 426.4 805.6 424.1 811.0 420.5 C816.4 416.9 809.4 416.3 808.5 413.0 C807.6 409.7 808.2 411.3 807.0 406.5 C805.8 401.7 805.0 400.2 803.5 392.5 C802.0 384.8 800.6 382.9 800.7 373.5 C800.8 364.1 802.2 359.8 803.9 352.0 C805.6 344.2 805.5 344.4 808.0 340.0 C810.5 335.6 810.7 336.1 814.7 333.0 C818.7 329.9 820.0 328.5 825.0 326.5 C830.0 324.5 830.6 324.5 836.0 324.5 Z" fill="none" stroke="#3c3644" stroke-width="1.3" stroke-dasharray="1.1 2.6" stroke-dashoffset="1" opacity=".8"/>
<g fill="none" stroke-width="1.25">
<path d="M592.6 531.2 C592.8 525.3 592.4 525.2 593.1 513.4 C593.9 501.6 593.3 507.4 594.8 495.8 C596.3 484.1 595.4 489.9 597.6 478.4 C599.9 467.0 598.6 472.6 601.5 461.4 C604.5 450.2 602.8 455.7 606.5 444.8 C610.2 433.9 608.2 439.3 612.6 428.7 C617.0 418.2 614.6 423.4 619.7 413.2 C624.8 403.0 622.1 408.0 627.8 398.3 C633.5 388.6 630.5 393.3 636.9 384.0 C643.3 374.8 639.9 379.3 646.9 370.6 C653.9 361.8 650.3 366.1 657.8 357.9 C665.4 349.7 661.5 353.6 669.6 346.1 C677.7 338.5 673.5 342.1 682.2 335.2 C690.8 328.2 686.4 331.5 695.5 325.2 C704.6 318.9 699.9 321.9 709.4 316.3 C719.0 310.7 714.1 313.3 724.1 308.4 C734.0 303.5 729.0 305.7 739.2 301.5 C749.5 297.3 744.3 299.3 754.9 295.8 C765.5 292.4 760.2 293.9 771.0 291.2 C781.9 288.5 776.4 289.7 787.5 287.7 C798.6 285.8 793.0 286.6 804.2 285.4 C815.5 284.3 809.9 284.7 821.2 284.3 C832.6 284.0 826.9 283.9 838.4 284.4 C849.8 284.8 844.1 284.4 855.6 285.6 C867.0 286.8 861.3 286.0 872.8 288.0 C884.2 290.0 878.5 288.8 889.9 291.5 C901.3 294.3 895.6 292.7 906.9 296.2 C918.1 299.8 912.5 297.8 923.6 302.1 C934.7 306.3 929.2 304.0 940.1 309.0 C951.0 314.0 945.6 311.3 956.2 317.0 C966.8 322.7 961.6 319.7 971.9 326.0 C982.2 332.4 977.1 329.0 987.1 336.0 C997.0 343.0 992.1 339.4 1001.7 347.0 C1011.2 354.7 1006.6 350.7 1015.7 358.9 C1024.8 367.1 1020.3 362.9 1029.0 371.7 C1037.6 380.4 1033.4 375.9 1041.5 385.2 C1049.6 394.5 1045.7 389.7 1053.3 399.5 C1060.8 409.3 1057.2 404.3 1064.2 414.5 C1071.2 424.7 1067.9 419.5 1074.2 430.1 C1080.6 440.6 1077.6 435.3 1083.3 446.2 C1089.0 457.1 1086.4 451.6 1091.4 462.8 C1096.5 474.1 1094.1 468.4 1098.5 479.9 C1102.9 491.4 1100.9 485.6 1104.6 497.3 C1108.3 508.9 1106.6 503.1 1109.6 514.9 C1112.6 526.7 1111.3 520.8 1113.5 532.7 C1115.7 544.6 1114.8 538.7 1116.3 550.7 C1117.8 562.6 1117.2 556.7 1118.0 568.6 C1118.7 580.6 1118.4 580.6 1118.5 586.6" stroke="#9494bc"/>
<path d="M1118.5 586.6 C1118.4 592.5 1118.7 592.6 1118.0 604.4 C1117.2 616.2 1117.8 610.4 1116.3 622.0 C1114.8 633.7 1115.7 627.9 1113.5 639.4 C1111.3 650.8 1112.6 645.2 1109.6 656.4 C1106.6 667.6 1108.3 662.1 1104.6 673.0 C1100.9 683.9 1102.9 678.5 1098.5 689.1 C1094.1 699.6 1096.5 694.5 1091.4 704.6 C1086.4 714.8 1089.0 709.8 1083.3 719.5 C1077.6 729.2 1080.6 724.5 1074.2 733.8 C1067.9 743.0 1071.2 738.5 1064.2 747.2 C1057.2 756.0 1060.8 751.8 1053.3 759.9 C1045.7 768.1 1049.6 764.2 1041.5 771.7 C1033.4 779.3 1037.6 775.7 1029.0 782.6 C1020.3 789.6 1024.8 786.3 1015.7 792.6 C1006.6 798.9 1011.2 795.9 1001.7 801.5 C992.1 807.1 997.0 804.5 987.1 809.4 C977.1 814.3 982.2 812.1 971.9 816.3 C961.6 820.5 966.8 818.6 956.2 822.0 C945.6 825.4 951.0 823.9 940.1 826.6 C929.2 829.3 934.7 828.1 923.6 830.1 C912.5 832.0 918.1 831.2 906.9 832.4 C895.6 833.5 901.3 833.1 889.9 833.5 C878.5 833.8 884.2 833.9 872.8 833.4 C861.3 833.0 867.0 833.4 855.6 832.2 C844.1 831.0 849.8 831.8 838.4 829.8 C826.9 827.8 832.6 829.0 821.2 826.3 C809.9 823.5 815.5 825.1 804.2 821.6 C793.0 818.1 798.6 820.0 787.5 815.7 C776.4 811.5 781.9 813.8 771.0 808.8 C760.2 803.8 765.5 806.5 754.9 800.8 C744.3 795.1 749.5 798.1 739.2 791.8 C729.0 785.4 734.0 788.8 724.1 781.8 C714.1 774.8 719.0 778.4 709.4 770.8 C699.9 763.2 704.6 767.1 695.5 758.9 C686.4 750.7 690.8 754.9 682.2 746.1 C673.5 737.4 677.7 741.9 669.6 732.6 C661.5 723.3 665.4 728.1 657.8 718.3 C650.3 708.5 653.9 713.5 646.9 703.3 C639.9 693.1 643.3 698.3 636.9 687.7 C630.5 677.2 633.5 682.5 627.8 671.6 C622.1 660.7 624.8 666.2 619.7 655.0 C614.6 643.7 617.0 649.4 612.6 637.9 C608.2 626.5 610.2 632.2 606.5 620.5 C602.8 608.9 604.5 614.7 601.5 602.9 C598.6 591.1 599.9 597.0 597.6 585.1 C595.4 573.2 596.3 579.1 594.8 567.1 C593.3 555.2 593.9 561.1 593.1 549.2 C592.4 537.2 592.8 537.2 592.6 531.2" stroke="#7c7ca4" opacity=".8"/>
<path d="M762.2 865.9 C759.7 865.7 759.6 866.1 754.5 865.3 C749.5 864.5 752.0 865.1 747.0 863.4 C742.0 861.8 744.5 862.8 739.6 860.3 C734.7 857.8 737.1 859.3 732.4 856.0 C727.7 852.7 730.0 854.5 725.5 850.4 C720.9 846.3 723.2 848.5 718.8 843.7 C714.4 838.8 716.6 841.4 712.4 835.8 C708.3 830.1 710.3 833.1 706.3 826.8 C702.4 820.4 704.3 823.7 700.6 816.7 C696.9 809.6 698.7 813.3 695.3 805.5 C691.9 797.8 693.5 801.8 690.3 793.4 C687.2 785.0 688.7 789.3 685.8 780.3 C682.9 771.3 684.3 775.9 681.7 766.4 C679.1 756.8 680.3 761.7 678.0 751.6 C675.8 741.5 676.8 746.6 674.9 736.0 C672.9 725.4 673.8 730.8 672.1 719.8 C670.5 708.8 671.2 714.4 669.9 702.9 C668.6 691.5 669.2 697.3 668.2 685.5 C667.3 673.7 667.7 679.7 667.0 667.6 C666.4 655.6 666.6 661.6 666.4 649.3 C666.1 637.0 666.1 643.2 666.2 630.7 C666.3 618.2 666.1 624.5 666.5 611.8 C666.9 599.2 666.7 605.5 667.4 592.8 C668.2 580.1 667.7 586.4 668.8 573.7 C669.9 560.9 669.3 567.3 670.7 554.6 C672.1 541.9 671.3 548.2 673.1 535.5 C674.8 522.9 673.9 529.2 676.0 516.7 C678.0 504.2 676.9 510.4 679.3 498.1 C681.7 485.7 680.4 491.8 683.1 479.8 C685.8 467.7 684.4 473.6 687.4 461.9 C690.4 450.1 688.8 455.9 692.1 444.4 C695.4 433.0 693.7 438.6 697.2 427.6 C700.7 416.5 698.9 421.9 702.7 411.3 C706.4 400.7 704.5 405.9 708.5 395.8 C712.5 385.7 710.5 390.6 714.7 381.0 C718.9 371.4 716.8 376.1 721.2 367.1 C725.6 358.0 723.4 362.4 728.0 354.0 C732.6 345.6 730.2 349.6 735.0 341.8 C739.8 334.1 737.4 337.8 742.3 330.7 C747.2 323.6 744.7 327.0 749.7 320.6 C754.7 314.2 752.2 317.2 757.3 311.6 C762.4 306.0 759.9 308.6 765.1 303.7 C770.3 298.8 767.7 301.1 772.9 297.0 C778.1 292.9 775.5 294.7 780.8 291.4 C786.1 288.1 783.4 289.6 788.7 287.1 C794.0 284.6 791.4 285.6 796.6 284.0 C801.9 282.3 799.3 282.9 804.5 282.1 C809.7 281.3 809.7 281.7 812.3 281.5" stroke="#dca2c0"/>
<path d="M1117.2 600.9 C1117.0 602.7 1117.4 602.7 1116.6 606.3 C1115.7 609.9 1116.4 608.1 1114.7 611.7 C1113.0 615.3 1114.1 613.5 1111.6 617.1 C1109.1 620.6 1110.5 618.9 1107.2 622.4 C1103.9 625.9 1105.7 624.2 1101.6 627.6 C1097.5 631.1 1099.7 629.4 1094.8 632.8 C1089.9 636.2 1092.6 634.5 1086.9 637.8 C1081.2 641.1 1084.3 639.5 1077.8 642.7 C1071.4 645.9 1074.8 644.3 1067.7 647.4 C1060.6 650.4 1064.3 648.9 1056.5 651.9 C1048.7 654.8 1052.8 653.4 1044.3 656.2 C1035.9 659.0 1040.2 657.7 1031.2 660.3 C1022.1 663.0 1026.8 661.7 1017.2 664.2 C1007.5 666.7 1012.5 665.5 1002.3 667.8 C992.1 670.1 997.3 669.0 986.7 671.1 C976.0 673.2 981.4 672.2 970.4 674.2 C959.3 676.1 964.9 675.2 953.4 676.9 C941.9 678.6 947.7 677.8 935.9 679.4 C924.1 680.9 930.0 680.2 917.9 681.5 C905.8 682.8 911.9 682.2 899.5 683.3 C887.2 684.3 893.4 683.9 880.8 684.7 C868.2 685.6 874.5 685.2 861.8 685.8 C849.1 686.4 855.5 686.2 842.7 686.6 C829.9 687.0 836.3 686.8 823.5 687.0 C810.7 687.1 817.1 687.1 804.3 687.0 C791.5 686.9 797.9 687.0 785.2 686.7 C772.5 686.4 778.8 686.6 766.2 686.1 C753.7 685.5 759.9 685.8 747.5 685.1 C735.1 684.3 741.2 684.7 729.1 683.7 C717.0 682.7 723.0 683.2 711.1 682.0 C699.3 680.8 705.1 681.4 693.6 680.0 C682.1 678.5 687.8 679.3 676.7 677.6 C665.6 676.0 671.0 676.8 660.3 675.0 C649.7 673.1 654.9 674.1 644.7 672.0 C634.6 669.9 639.5 671.0 629.9 668.8 C620.2 666.5 624.9 667.7 615.8 665.2 C606.8 662.8 611.2 664.0 602.7 661.4 C594.3 658.8 598.3 660.2 590.5 657.4 C582.7 654.6 586.4 656.0 579.3 653.1 C572.2 650.2 575.6 651.7 569.2 648.7 C562.8 645.6 565.8 647.2 560.1 644.0 C554.5 640.8 557.1 642.4 552.2 639.2 C547.3 635.9 549.5 637.6 545.4 634.2 C541.3 630.8 543.1 632.5 539.8 629.1 C536.5 625.6 538.0 627.4 535.5 623.9 C533.0 620.4 534.0 622.1 532.3 618.6 C530.7 615.0 531.3 616.8 530.5 613.2 C529.6 609.6 530.0 609.6 529.8 607.8" stroke="#a0dcb6"/>
</g>
</svg><!--FIG-END-->
<div id="infobar" class="abs"></div>
<div id="ia1" class="abs info" style="left:163px;top:888px">FOV: 60</div>
<div id="ia2" class="abs info" style="left:163px;top:903px">FPS:   500.0</div>
<div id="ia3" class="abs info" style="left:163px;top:918px">BO_RENDERING</div>
<div id="ia4" class="abs info" style="left:163px;top:933px">Clipping Near:   0.13</div>
<div id="ib1" class="abs info" style="left:821px;top:888px">Mesh: I_F081_T039-T06-01_T000-T00-00_B02910.obj</div>
<div id="ib2" class="abs info" style="left:821px;top:903px">Vertices: 6,890</div>
<div id="ib3" class="abs info" style="left:821px;top:918px">Faces: 13,776</div>
<div id="ib4" class="abs info" style="left:821px;top:933px">Selection: v: 0 f: 0</div>
</div>
<div id="dock" class="abs"></div>
<div id="docktitle" class="abs"><span id="dtt">Project_1</span></div>
<div id="tree" class="abs"></div>
<div id="row" class="abs"></div>
<div id="rzero" class="abs rt" style="left:1700px;top:128px">0</div>
<div class="abs rt" id="rname" style="left:1737px;top:128px">I_F081_T039-T06-01_T...</div>

<div class="abs nb" style="left:1661.5px">1</div>
<div class="abs nb" style="left:1693.5px">2</div>
<div class="abs nb" style="left:1725.5px">3</div>
<div class="abs nb" style="left:1757.5px">4</div>
<div class="abs nb" style="left:1918.5px">1</div>
<div class="abs nb" style="left:1950.5px">2</div>
<div class="abs nb" style="left:1982.5px">3</div>
<div class="abs nb" style="left:2014.5px">4</div>
<div id="group" class="abs"></div>
<div id="grouptitle" class="abs">I_F081_T039-T06-01_T000-T00-00...10.obj</div>
<div class="abs tab" style="left:1673px;width:43px"></div>
<div class="abs tab" style="left:1766px;width:45px"></div>
<div class="abs tab" style="left:1810px;width:47px"></div>
<div class="abs tab" style="left:1857px;width:48px"></div>
<div class="abs tab" style="left:1904px;width:45px"></div>
<div id="tabpane" class="abs"></div>
<div class="abs tab tsel" style="left:1715px;width:51px;top:602px;height:26px"></div>
<!--TABICONS--><!--PI-START--><svg class="abs" style="left:1650px;top:88px" width="398" height="560" viewBox="1650 88 398 560">
<defs>
<linearGradient id="gcyl2" x1="0" y1="0" x2="1" y2="0"><stop offset="0" stop-color="#8cbcf0"/><stop offset=".4" stop-color="#fbfdff"/><stop offset=".6" stop-color="#d8e8fa"/><stop offset="1" stop-color="#7fb2ea"/></linearGradient>
<g id="sbox" fill="none" stroke="#6a6a6a" stroke-width=".8" stroke-linejoin="round"><rect x="0" y="3.4" width="12" height="12.6"/><path d="M0 3.4 L3.6 0 L16 .6 L12 3.4 M16 .6 V13 L12 16"/><path d="M3.6 0 V12.6 L0 16 M3.6 12.6 L16 13 M6 3.4 V16 M9 3.4 V16" stroke="#a4a4a4" stroke-width=".6"/></g>
<g id="spts" fill="#2a3c5c"><circle cx="2.4" cy="1" r=".85"/><circle cx=".8" cy="2.6" r=".85"/><circle cx="5" cy="3.8" r=".85"/><circle cx="8.6" cy=".6" r=".85"/><circle cx="13" cy="1.8" r=".85"/><circle cx="11.2" cy="3.4" r=".85"/><circle cx="2.4" cy="12.6" r=".85"/><circle cx=".8" cy="14.2" r=".85"/><circle cx="5" cy="15.4" r=".85"/><circle cx="8.6" cy="12.2" r=".85"/><circle cx="13" cy="13.4" r=".85"/><circle cx="11.2" cy="15" r=".85"/></g>
<g id="swire" fill="none" stroke="#333" stroke-width=".75"><ellipse cx="6.5" cy="1.8" rx="6" ry="1.8"/><path d="M.5 1.8 L1.2 13.6 Q6.5 16.6 11.8 13.6 L12.5 1.8 M.5 1.8 L8.4 15.4 M12.5 1.8 L4.6 15.4 M3.4 .4 L11.8 13.6 M9.6 .4 L1.2 13.6 M3.4 .4 L2.4 14.6 M9.6 .4 L10.6 14.6 M6.5 3.6 L4.6 15.4 M6.5 3.6 L8.4 15.4"/></g>
<g id="sflat"><path d="M0 1.6 Q6.2 -1.4 12.4 1.6 V12 Q6.2 15 0 12 Z" fill="url(#gcyl2)"/><path d="M0 1.6 Q6.2 -1.2 12.4 1.6 Q6.2 4 0 1.6 Z" fill="#d8e9fb"/></g>
<g id="sred"><path d="M1.6 1.4 L10.6 .2 L13 1.6 V14 L3.6 15 L1 13.6 Z" fill="#e8eef0" stroke="#6a8a7a" stroke-width=".6"/><path d="M5.6 .8 L10.6 .4 L12 1.4 L5.6 14.8 L1.2 13.6 Z" fill="#e8404c"/><path d="M10.6 6 L12.8 4 V14 L10 14.4 Z" fill="#c8d4d0"/></g>
<g id="stex"><path d="M2.4 1 L8 0 L13.4 1.8 L15.4 6 L14.6 12 L9.4 15.2 L3.4 14 L.4 9 L.6 4 Z" fill="#5e6a62" stroke="#2e3a3a" stroke-width=".7"/><path d="M3.6 3 L8 2 L12 3.4 L13.4 7 L12.6 11 L9 13 L4.4 12 L2.6 8.4 Z" fill="#58c890"/><path d="M5 4.6 L9.4 5.4 L11.6 8.8 L8.4 11.4 L5 9.6 Z" fill="#d8f8e8"/><path d="M3 2 L13 13 M12.6 2.4 L3.4 13.6 M8 .4 V15 M.8 7 H15" stroke="#2e3a3a" stroke-width=".5" opacity=".6"/></g>
</defs>
<!-- dock title buttons -->
<g fill="none" stroke="#1e1e1e" stroke-width="1.5">
<path d="M2009.6 95.4 H2015.6 V97.6 M2007.8 97.6 H2013.6 V103.4 H2007.8 Z M2007.8 99 H2013.6"/>
<path d="M2030.8 95 L2038.6 103 M2038.6 95 L2030.8 103" stroke-width="1.7"/>
</g>
<!-- row -->
<path d="M1663.4 132 L1667.6 136.2 L1663.4 140.4" fill="none" stroke="#7a7a7a" stroke-width="1.3"/>
<rect x="1674.5" y="127" width="17.4" height="16.8" fill="#92b9e8" stroke="#7ea4d4" stroke-width=".8"/>
<path d="M1676.2 137 Q1679.4 131.6 1685.4 131.8 Q1689.6 132.2 1690.8 134 Q1688.4 138.8 1682.8 139.2 Q1678.6 139.2 1676.2 137 Z" fill="#1ec050" stroke="#0c8a30" stroke-width=".5"/>
<path d="M1686 132.4 Q1689.4 132.8 1690.4 134.2 Q1689 136 1687 137 Q1687.6 134.6 1686 132.4 Z" fill="#b8f0c0"/>
<circle cx="1682.4" cy="134.8" r="1.8" fill="#0a1a0a"/>
<circle cx="1683.2" cy="134.2" r=".6" fill="#c8f8d0"/>
<g stroke="#9fd0fa" stroke-width="1" fill="#cce6fb">
<rect x="1912.5" y="124.5" width="24" height="22" rx="2.5"/>
<rect x="1961.5" y="124.5" width="24" height="22" rx="2.5"/>
<rect x="1985.7" y="124.5" width="24" height="22" rx="2.5"/>
<rect x="2009.9" y="124.5" width="24" height="22" rx="2.5"/>
</g>
<use href="#sbox" x="1891" y="127.8"/>
<use href="#spts" x="1917.6" y="127.6"/>
<use href="#swire" x="1942" y="127.8"/>
<use href="#sflat" x="1968.2" y="129.8"/>
<use href="#sred" x="1991.4" y="128"/>
<use href="#stex" x="2015.4" y="127.8"/>
<!-- tab icons -->
<use href="#sbox" x="1683.8" y="606.6" opacity=".85"/>
<use href="#spts" x="1731.4" y="605.6" opacity=".8"/>
<use href="#swire" x="1778.4" y="606.6"/>
<use href="#sflat" x="1825.6" y="607.6"/>
<use href="#sred" x="1872" y="606.6"/>
<use href="#stex" x="1918.6" y="606.2"/>
</svg>
<!--PI-END-->
<div id="lb1" class="abs lbl" style="top:641px">Shading</div>
<div class="abs sel" style="left:1827px;top:640px;width:40px;height:18px"></div><div id="op1" class="abs opt" style="left:1836px;top:641px">Vert</div>
<div id="op2" class="abs opt" style="left:1874px;top:641px">Dot Decorator</div>
<div id="op3" class="abs opt" style="left:1971px;top:641px">None</div>
<div id="lb2" class="abs lbl" style="top:671px">Color</div>
<div class="abs sel" style="left:1827px;top:670px;width:50px;height:18px"></div><div id="op4" class="abs opt" style="left:1835.2px;top:671px;font-size:13.7px">Mesh</div>
<div id="op5" class="abs opt" style="left:1885px;top:671px">User-Def</div>
<div class="abs" style="left:1946px;top:670.5px;width:17px;height:17.5px;background:#ffe24f"></div>
<div id="lb3" class="abs lbl" style="top:741px">Point Size</div>
<div class="abs" style="left:1874px;top:746px;width:90px;height:3px;background:#e2e2e2;border:1px solid #d4d4d4"></div>
<div class="abs" style="left:1884px;top:737px;width:11px;height:23px;background:#0078d7"></div>
<div id="op6" class="abs opt" style="left:1858px;top:802px">apply to all visible layers</div>
<div class="abs" style="left:2014px;top:803px;width:14px;height:14px;background:#fff;border:1px solid #444;border-radius:3px"></div>

<div id="log" class="abs"><div id="logtext" class="abs"><div id="lg1" class="lgl">Started Mode Align</div><div id="lg2" class="lgl">Started Mode Get Info</div><div id="lg3" class="lgl">Recentering on point [0.073171 1.051421</div><div id="lg4" class="lgl">0.015865] [767,444]</div><div id="lg5" class="lgl">Recentering on point [0.129520 1.000797</div><div id="lg6" class="lgl">0.267476] [745,250]</div><div id="lg7" class="lgl">Selected new Mesh 0</div><div id="lg8" class="lgl">Selected new Mesh 0</div><div id="lg9" class="lgl">Recentering on point [0.129614 1.010301</div><div id="lg10" class="lgl">0.267471] [771,515]</div><div id="lg11" class="lgl">Started Mode Get Info</div><div id="lg12" class="lgl">Started Mode Get Info</div><div id="lg13" class="lgl">Started Mode Get Info</div></div></div>
<div id="status" class="abs"></div>
<div class="abs" style="left:0;top:1069px;width:1646px;height:2px;background:#fafafa"></div>
<div class="abs" style="left:0;top:86px;width:1646px;height:1px;background:#e8e8e8"></div>
<div class="abs" style="left:0;top:87px;width:1646px;height:1px;background:#d2d2d2"></div>
<div class="abs" style="left:0;top:88px;width:1646px;height:1px;background:#9c9c9c"></div>
<div class="abs" style="left:0;top:89px;width:1645px;height:1px;background:#565656"></div>
<div class="abs" style="left:1px;top:90px;width:1644px;height:1px;background:#1c1c1c"></div>
<div class="abs" style="left:0;top:88px;width:1px;height:981px;background:linear-gradient(#000,#8080ff)"></div>
<div class="abs" style="left:0;top:976px;width:1px;height:93px;background:#7f4584"></div>
<div class="abs" style="left:0;top:88px;width:1.3px;height:981px;background:rgba(235,235,235,.42);z-index:3"></div>
<div class="abs" style="left:1px;top:89px;width:1px;height:980px;background:rgba(120,120,120,.3)"></div>
<div class="abs" style="left:1643.5px;top:89px;width:2px;height:980px;background:linear-gradient(90deg,rgba(220,220,230,.25),rgba(232,232,236,.75))"></div>

<div class="abs" style="left:862px;top:1074px;width:819px;height:23px;background:#e6e6e6;border:1px solid #bcbcbc"></div>
<div class="abs" style="left:1721px;top:1073px;width:1px;height:25px;background:#dcdcdc"></div>
<div class="abs" style="left:1727px;top:1073px;width:320px;height:25px;background:#cfcfcf;border:1.5px solid #747474"></div>
<div class="abs" style="left:1728.5px;top:1074.5px;width:32.5px;height:22px;background:#74c17c"></div>
<div class="abs" id="mem" style="left:1727px;top:1077px;width:320px;text-align:center;font-size:13.6px;line-height:16px;white-space:nowrap">Mem 10% 1246/12288 MB</div>
<div class="abs" style="left:1661px;top:1059px;width:376px;height:1.5px;background:#8c8c8c"></div>
<div class="abs" style="left:2028px;top:969px;width:2px;height:72px;background:#5a5a5a"></div>
<div id="wm1" class="abs wm" style="left:1605px;top:1002px;font-size:22px;line-height:24px">Windows 정품 인증</div>
<div id="wm2" class="abs wm" style="left:1605px;top:1029px;font-size:17px;line-height:20px">[설정]으로 이동하여 Windows를 정품 인증합니다.</div>

</body>
</html>
